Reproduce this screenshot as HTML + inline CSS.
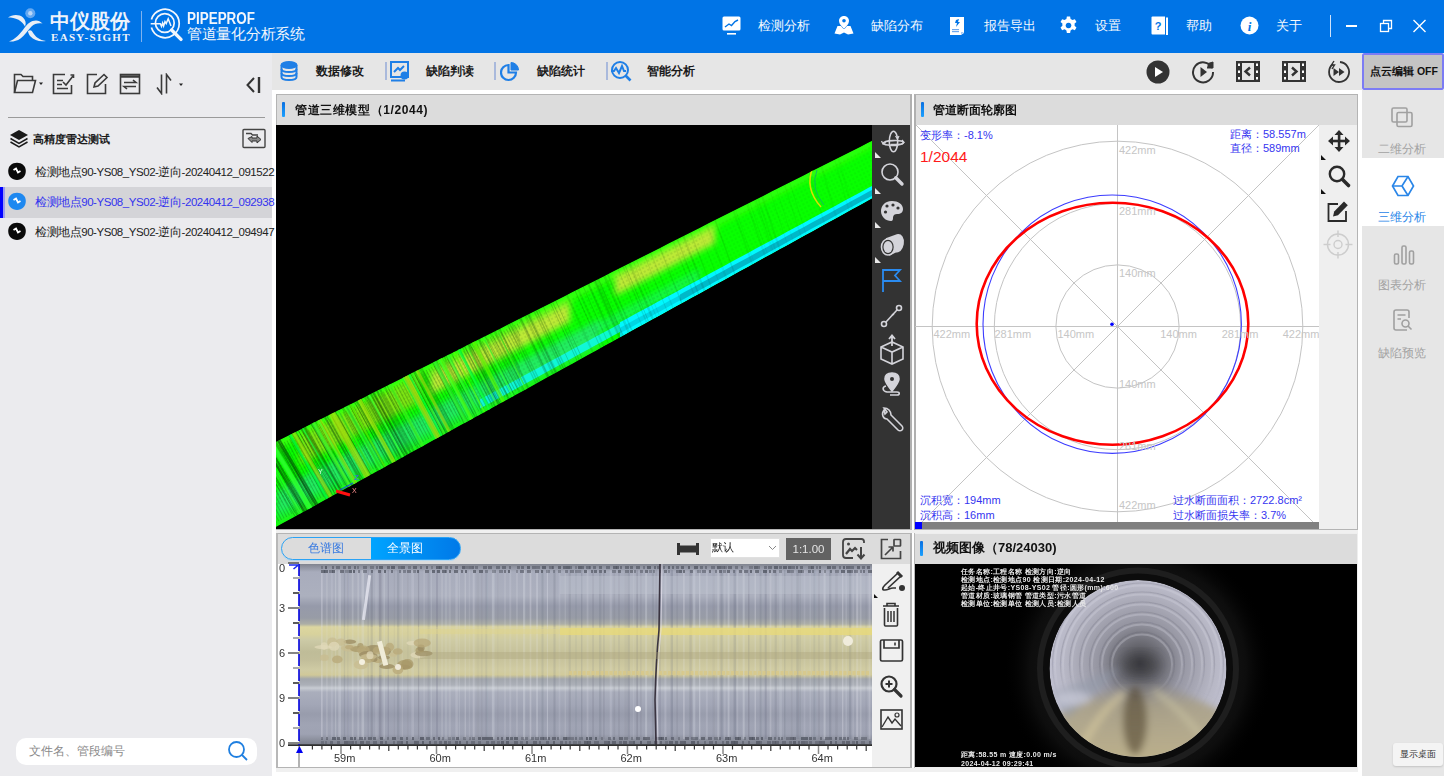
<!DOCTYPE html>
<html><head><meta charset="utf-8">
<style>
*{margin:0;padding:0;box-sizing:border-box}
html,body{width:1444px;height:776px;overflow:hidden;background:#fff;font-family:"Liberation Sans",sans-serif}
.a{position:absolute}
#hdr{left:0;top:0;width:1444px;height:53px;background:#0074E6}
#left{left:0;top:53px;width:272px;height:723px;background:#EBEBEE}
#tb{left:272px;top:53px;width:1090px;height:37px;background:#E6E6E6}
#side{left:1362px;top:90px;width:82px;height:686px;background:#E6E6E6}
.panel{border:1px solid #B4B4B4;background:#fff}
.ph{background:#DCDCDC}
.ttl{font-size:12px;font-weight:bold;color:#111;white-space:nowrap}
.bar{width:3px;height:15px;background:linear-gradient(#0A6FE0,#1AA0FF);border-radius:1px}
.w{color:#fff}
</style></head><body>
<div id="hdr" class="a">
 <svg class="a" style="left:0;top:0" width="52" height="52" viewBox="0 0 52 52">
  <circle cx="30.3" cy="13.2" r="5" fill="#6FAEF2" opacity="0.9"/>
  <circle cx="30.3" cy="13.2" r="2.2" fill="#B8D6F8"/>
  <path d="M8 17.5 C12 14.5 19 14 23 17.5 C25.5 20 26.5 23 25 26.5 C23.5 24 21.5 21.5 18.5 19.8 C15 18 11.5 17.5 8 17.5 Z" fill="#E8EEF6"/>
  <path d="M9 41.5 C15 39.5 19.5 34.5 24 28.5 C27.5 23.5 31 20.5 36 20.5 C38.5 20.5 40.5 21.8 42.5 23.5 C38.5 22.8 34.5 23.5 31.5 26.5 C27.5 30.5 24.5 35.5 20.5 38.5 C17 41 13 41.8 9 41.5 Z" fill="#E8EEF6"/>
  <path d="M28 31 C30 29.5 31.5 30 32.8 32.5 C35.5 37 39.5 40 46 41 C40 42 34 40.5 30.5 36.5 C29 34.8 28.2 32.8 28 31 Z" fill="#E8EEF6"/>
 </svg>
 <div class="a w" style="left:50px;top:8px;font-size:20px;line-height:26px;letter-spacing:0px;font-weight:bold;color:#EEF3FA">中仪股份</div>
 <div class="a" style="left:51px;top:31px;font-family:'Liberation Serif',serif;font-size:11px;line-height:12px;font-weight:bold;letter-spacing:1.3px;color:#EEF3FA">EASY-SIGHT</div>
 <div class="a" style="left:141px;top:11px;width:1px;height:31px;background:#7FB2EE"></div>
 <svg class="a" style="left:145px;top:4px" width="44" height="44" viewBox="0 0 44 44" fill="none" stroke="#F2F6FC">
  <path d="M6.4 15.5 A14.2 14.2 0 1 1 6.4 23.5" stroke-width="1.7"/>
  <circle cx="19.8" cy="19" r="9.4" stroke-width="1.7"/>
  <path d="M5.7 19.8 H15.3 L16.5 22.5 L17.6 19 L18.6 22 L20 17.5 L21.2 19.6 L23.2 14.7 L26 22" stroke-width="1.5"/>
  <path d="M26.6 26 L36 35.4" stroke-width="3.4" stroke-linecap="round"/>
 </svg>
 <div class="a" style="left:187px;top:10px;font-size:16px;line-height:18px;font-weight:bold;color:#F2F6FC;transform:scaleX(0.84);transform-origin:0 0">PIPEPROF</div>
 <div class="a" style="left:187px;top:25px;font-size:15px;line-height:17px;color:#F2F6FC;letter-spacing:-0.3px">管道量化分析系统</div>
<div class="a" style="left:758px;top:17px;font-size:13px;line-height:18px;color:#F4F8FD">检测分析</div>
 <div class="a" style="left:871px;top:17px;font-size:13px;line-height:18px;color:#F4F8FD">缺陷分布</div>
 <div class="a" style="left:984px;top:17px;font-size:13px;line-height:18px;color:#F4F8FD">报告导出</div>
 <div class="a" style="left:1095px;top:17px;font-size:13px;line-height:18px;color:#F4F8FD">设置</div>
 <div class="a" style="left:1186px;top:17px;font-size:13px;line-height:18px;color:#F4F8FD">帮助</div>
 <div class="a" style="left:1276px;top:17px;font-size:13px;line-height:18px;color:#F4F8FD">关于</div>
 <svg class="a" style="left:722px;top:16px" width="20" height="20" viewBox="0 0 20 20">
  <rect x="0.5" y="0.5" width="18" height="14" rx="1.5" fill="#fff"/>
  <rect x="5" y="17" width="9" height="1.6" fill="#fff"/>
  <path d="M3 11 L7 8 L9.5 9.5 L13 5.5 L16 4" stroke="#0074E6" stroke-width="1.4" fill="none"/>
 </svg>
 <svg class="a" style="left:834px;top:15px" width="20" height="20" viewBox="0 0 20 20">
  <path d="M0.5 18.5 L3.5 11 L7 11 L9.5 14 L10.5 14 L13 11 L16.5 11 L19.5 18.5 L14 19.5 L10 17.5 L6 19.5 Z" fill="#fff"/>
  <path d="M10 1 C13 1 15 3.2 15 6 C15 9 12 11.5 10 14 C8 11.5 5 9 5 6 C5 3.2 7 1 10 1 Z" fill="#fff"/>
  <circle cx="10" cy="5.8" r="1.8" fill="#0074E6"/>
 </svg>
 <svg class="a" style="left:949px;top:16px" width="18" height="20" viewBox="0 0 18 20">
  <path d="M1 1 H15 V17 L12 19 H1 Z" fill="#fff"/>
  <path d="M12 19 V16 H15" fill="#A9CCF5"/>
  <path d="M7 4 L10 3 L9 6 L11 6 L7 11 L8 7 L6 7 Z" fill="#0074E6"/>
  <rect x="3" y="13" width="7" height="1.2" fill="#6FA8EE"/><rect x="3" y="15" width="7" height="1.2" fill="#6FA8EE"/>
 </svg>
 <svg class="a" style="left:1059px;top:16px" width="19" height="19" viewBox="0 0 20 20">
  <path fill="#fff" fill-rule="evenodd" d="M8.3 0.5h3.4l0.5 2.6a7.5 7.5 0 0 1 2 1.15l2.5-0.9 1.7 2.95-2 1.7a7.5 7.5 0 0 1 0 2.3l2 1.7-1.7 2.95-2.5-0.9a7.5 7.5 0 0 1-2 1.15l-0.5 2.6H8.3l-0.5-2.6a7.5 7.5 0 0 1-2-1.15l-2.5 0.9-1.7-2.95 2-1.7a7.5 7.5 0 0 1 0-2.3l-2-1.7 1.7-2.95 2.5 0.9a7.5 7.5 0 0 1 2-1.15zM10 7a3 3 0 1 0 0.01 0z"/>
 </svg>
 <svg class="a" style="left:1151px;top:16px" width="18" height="20" viewBox="0 0 18 20">
  <path d="M0.5 1.5 Q0.5 0.5 1.5 0.5 H14 V18.5 H1.5 Q0.5 18.5 0.5 17.5 Z" fill="#fff"/>
  <rect x="15" y="1.5" width="2" height="17.5" fill="#fff"/>
  <text x="7" y="14" font-size="11" font-weight="bold" text-anchor="middle" fill="#0074E6" font-family="Liberation Sans">?</text>
 </svg>
 <svg class="a" style="left:1240px;top:16px" width="19" height="19" viewBox="0 0 19 19">
  <circle cx="9.5" cy="9.5" r="9" fill="#fff"/>
  <text x="9.5" y="15" font-size="13" font-weight="bold" font-style="italic" text-anchor="middle" fill="#0074E6" font-family="Liberation Serif">i</text>
 </svg>
 <div class="a" style="left:1330px;top:15px;width:1px;height:22px;background:#CFE2FA"></div>
 <div class="a" style="left:1346px;top:25px;width:11px;height:1.5px;background:#fff"></div>
 <svg class="a" style="left:1379px;top:19px" width="14" height="14" viewBox="0 0 14 14" fill="none" stroke="#fff" stroke-width="1.3">
  <rect x="1.5" y="4.5" width="8" height="8"/>
  <path d="M4.5 4.5 V1.5 H12.5 V9.5 H9.5"/>
 </svg>
 <svg class="a" style="left:1412px;top:19px" width="15" height="15" viewBox="0 0 15 15" stroke="#fff" stroke-width="1.4">
  <path d="M1.5 1 L13.5 13 M13.5 1 L1.5 13"/>
 </svg>
</div>
<div id="left" class="a">
 <svg class="a" style="left:13px;top:19px" width="32" height="24" viewBox="0 0 32 24" fill="none" stroke="#3A3A3A" stroke-width="1.6">
  <path d="M1.5 20.5 V2.5 H8 L10 4.5 H19.5 V8"/>
  <path d="M1.5 20.5 L4.5 8.5 H22.5 L19.5 20.5 Z"/>
  <path d="M26 10.5 H30 L28 13 Z" fill="#222" stroke="none"/>
 </svg>
 <svg class="a" style="left:52px;top:20px" width="24" height="22" viewBox="0 0 24 22" fill="none" stroke="#3A3A3A" stroke-width="1.6">
  <path d="M13 1.5 H1.5 V20.5 H19.5 V12"/>
  <path d="M5 7.5 H11 M5 11.5 H10 M5 15.5 H16"/>
  <path d="M11 9 L14 12 L21 3"/><path d="M18.5 2 H21.5 V5"/>
 </svg>
 <svg class="a" style="left:86px;top:20px" width="24" height="22" viewBox="0 0 24 22" fill="none" stroke="#3A3A3A" stroke-width="1.6">
  <path d="M11 1.5 H1.5 V20.5 H19.5 V11"/>
  <path d="M8 14 L9 10 L18 1.5 L21 4.5 L12 13 Z"/>
 </svg>
 <svg class="a" style="left:119px;top:20px" width="23" height="22" viewBox="0 0 23 22" fill="none" stroke="#3A3A3A" stroke-width="1.6">
  <rect x="1.5" y="1.5" width="19" height="19"/>
  <path d="M1.5 3.5 H20.5" stroke-width="2.5"/>
  <path d="M5 9.5 H17 L14 7 M17 13.5 H5 L8 16"/>
 </svg>
 <svg class="a" style="left:155px;top:20px" width="32" height="22" viewBox="0 0 32 22" fill="none" stroke="#3A3A3A" stroke-width="1.6">
  <path d="M6.5 1.5 V20.5 L2 14.5"/>
  <path d="M11.5 20.5 V1.5 L16 7.5"/>
  <path d="M24 10.5 H28 L26 13 Z" fill="#222" stroke="none"/>
 </svg>
 <svg class="a" style="left:244px;top:22px" width="18" height="20" viewBox="0 0 18 20" fill="none" stroke="#333" stroke-width="2">
  <path d="M10 3 L3.5 10 L10 17"/><path d="M15 2 V18" stroke-width="2.4"/>
 </svg>
 <div class="a" style="left:8px;top:64px;width:257px;height:1px;background:#9A9A9A"></div>
 <svg class="a" style="left:9px;top:76px" width="20" height="20" viewBox="0 0 20 20">
  <path d="M10 1 L19 6 L10 11 L1 6 Z" fill="#1A1A1A"/>
  <path d="M1.5 9.5 L10 14.3 L18.5 9.5" fill="none" stroke="#1A1A1A" stroke-width="1.5"/>
  <path d="M1.5 13 L10 17.8 L18.5 13" fill="none" stroke="#1A1A1A" stroke-width="1.5"/>
 </svg>
 <div class="a" style="left:33px;top:78px;font-size:11px;line-height:16px;font-weight:bold;color:#1A1A1A">高精度雷达测试</div>
 <svg class="a" style="left:242px;top:75px" width="24" height="21" viewBox="0 0 24 21" fill="none" stroke="#444" stroke-width="1.4">
  <rect x="1" y="1.5" width="22" height="18" rx="1"/>
  <path d="M4 5.5 H9 L10.5 7 H16"/><path d="M6 10.5 L10 8.5 L10 10 H15 V8 L19 11.5 L15 15 V13 H10 V14.5 Z" fill="#888" stroke="#333" stroke-width="1"/>
 </svg>
 <div class="a" style="left:0;top:134px;width:272px;height:31px;background:#D4D4D8"></div>
 <div class="a" style="left:0;top:134px;width:3px;height:31px;background:#0000FF"></div>
 <div class="a" style="left:3px;top:134px;width:2px;height:31px;background:#9C9CF0"></div>
 <svg class="a" style="left:7px;top:109px" width="20" height="19" viewBox="0 0 20 19"><path d="M10 0.8 C15 0.8 18.8 4 18.8 9 C18.8 14.5 15 18 10 18 C5 18 1.2 14.5 1.2 9 C1.2 4 5 0.8 10 0.8 Z" fill="#0A0A0A"/><path d="M6.5 8 L9 6.5 L11 10.5 L13.5 9" stroke="#fff" stroke-width="1.8" fill="none"/></svg>
 <div class="a" style="left:35px;top:111px;font-size:11.5px;line-height:16px;letter-spacing:-0.45px;color:#222;white-space:nowrap">检测地点90-YS08_YS02-逆向-20240412_091522</div>
 <svg class="a" style="left:7px;top:139px" width="20" height="19" viewBox="0 0 20 19"><path d="M10 0.8 C15 0.8 18.8 4 18.8 9 C18.8 14.5 15 18 10 18 C5 18 1.2 14.5 1.2 9 C1.2 4 5 0.8 10 0.8 Z" fill="#1E88F0"/><path d="M6.5 8 L9 6.5 L11 10.5 L13.5 9" stroke="#fff" stroke-width="1.8" fill="none"/></svg>
 <div class="a" style="left:35px;top:141px;font-size:11.5px;line-height:16px;letter-spacing:-0.45px;color:#3333EE;white-space:nowrap">检测地点90-YS08_YS02-逆向-20240412_092938</div>
 <svg class="a" style="left:7px;top:169px" width="20" height="19" viewBox="0 0 20 19"><path d="M10 0.8 C15 0.8 18.8 4 18.8 9 C18.8 14.5 15 18 10 18 C5 18 1.2 14.5 1.2 9 C1.2 4 5 0.8 10 0.8 Z" fill="#0A0A0A"/><path d="M6.5 8 L9 6.5 L11 10.5 L13.5 9" stroke="#fff" stroke-width="1.8" fill="none"/></svg>
 <div class="a" style="left:35px;top:171px;font-size:11.5px;line-height:16px;letter-spacing:-0.45px;color:#222;white-space:nowrap">检测地点90-YS08_YS02-逆向-20240412_094947</div>
 
 <div class="a" style="left:16px;top:685px;width:241px;height:27px;border-radius:10px;background:#fff"></div>
 <div class="a" style="left:29px;top:690px;font-size:12px;line-height:17px;color:#8A8A8A">文件名、管段编号</div>
 <svg class="a" style="left:227px;top:687px" width="22" height="22" viewBox="0 0 22 22" fill="none" stroke="#1F7FE0" stroke-width="1.8">
  <circle cx="9.5" cy="9.5" r="7.5"/><path d="M15 15 L20 20"/>
 </svg>
</div>
<div id="tb" class="a">
 <svg class="a" style="left:8px;top:8px" width="18" height="20" viewBox="0 0 18 20" fill="none" stroke="#1F7FE6" stroke-width="2">
  <ellipse cx="9" cy="4" rx="7.5" ry="3" fill="#1F7FE6"/>
  <path d="M1.5 4 V16 C1.5 18 5 19 9 19 C13 19 16.5 18 16.5 16 V4"/>
  <path d="M1.5 8 C1.5 10 5 11 9 11 C13 11 16.5 10 16.5 8" />
  <path d="M1.5 12 C1.5 14 5 15 9 15 C13 15 16.5 14 16.5 12"/>
  <path d="M1.5 5 V15.5 C4 17.5 14 17.5 16.5 15.5 V5" fill="#1F7FE6" stroke="none" opacity="0"/>
 </svg>
 <div class="a ttl" style="left:44px;top:9px;font-size:12px;line-height:18px;color:#1A1A1A">数据修改</div>
 <div class="a" style="left:113px;top:9px;width:1.5px;height:18px;background:#A9B9DC"></div>
 <svg class="a" style="left:118px;top:8px" width="21" height="21" viewBox="0 0 21 21" fill="none" stroke="#1F7FE6" stroke-width="2">
  <rect x="1" y="1" width="17" height="15"/>
  <path d="M4 11 L8 7 L10 9 L14 5"/>
  <circle cx="14.5" cy="14.5" r="3" fill="#1F7FE6"/>
  <path d="M1 19.5 H15"/>
 </svg>
 <div class="a ttl" style="left:154px;top:9px;font-size:12px;line-height:18px;color:#1A1A1A">缺陷判读</div>
 <div class="a" style="left:222px;top:9px;width:1.5px;height:18px;background:#A9B9DC"></div>
 <svg class="a" style="left:228px;top:8px" width="21" height="21" viewBox="0 0 21 21" fill="none" stroke="#1F7FE6" stroke-width="2.2">
  <path d="M8.5 4 A7.5 7.5 0 1 0 16 11.5 H8.5 Z"/>
  <path d="M11 1.5 A7.5 7.5 0 0 1 18.5 9 H11 Z" fill="#1F7FE6" stroke-width="1"/>
 </svg>
 <div class="a ttl" style="left:265px;top:9px;font-size:12px;line-height:18px;color:#1A1A1A">缺陷统计</div>
 <div class="a" style="left:334px;top:9px;width:1.5px;height:18px;background:#A9B9DC"></div>
 <svg class="a" style="left:338px;top:7px" width="22" height="22" viewBox="0 0 22 22" fill="none" stroke="#1F7FE6" stroke-width="2">
  <circle cx="10" cy="10" r="8"/>
  <path d="M1 11 H4 L6 8 L9 13 L12 6 L14 11 H16"/>
  <path d="M15.5 15.5 L20.5 20.5" stroke-width="2.6"/>
 </svg>
 <div class="a ttl" style="left:375px;top:9px;font-size:12px;line-height:18px;color:#1A1A1A">智能分析</div>
 <svg class="a" style="left:874px;top:7px" width="24" height="24" viewBox="0 0 24 24">
  <circle cx="12" cy="12" r="11.5" fill="#333"/><path d="M9 7 L17 12 L9 17 Z" fill="#fff"/>
 </svg>
 <svg class="a" style="left:919px;top:7px" width="25" height="24" viewBox="0 0 25 24" fill="none" stroke="#333" stroke-width="2">
  <path d="M21 8 A10 10 0 1 0 22 12"/><path d="M17 3.5 L22 2 V8 H16" fill="#333" stroke-width="1"/>
  <path d="M9.5 7 L16 12 L9.5 17 Z" fill="#333" stroke="none"/>
 </svg>
 <svg class="a" style="left:964px;top:8px" width="24" height="21" viewBox="0 0 24 21">
  <rect x="0" y="0" width="24" height="21" fill="#333"/>
  <rect x="6" y="2" width="12" height="17" fill="#E6E6E6"/>
  <rect x="2" y="2.5" width="2" height="2.5" fill="#fff"/><rect x="2" y="9.5" width="2" height="2.5" fill="#fff"/><rect x="2" y="16" width="2" height="2.5" fill="#fff"/>
  <rect x="20" y="2.5" width="2" height="2.5" fill="#fff"/><rect x="20" y="9.5" width="2" height="2.5" fill="#fff"/><rect x="20" y="16" width="2" height="2.5" fill="#fff"/>
  <path d="M14 6.5 L9.5 10.5 L14 14.5" fill="none" stroke="#333" stroke-width="2.4"/>
 </svg>
 <svg class="a" style="left:1010px;top:8px" width="24" height="21" viewBox="0 0 24 21">
  <rect x="0" y="0" width="24" height="21" fill="#333"/>
  <rect x="6" y="2" width="12" height="17" fill="#E6E6E6"/>
  <rect x="2" y="2.5" width="2" height="2.5" fill="#fff"/><rect x="2" y="9.5" width="2" height="2.5" fill="#fff"/><rect x="2" y="16" width="2" height="2.5" fill="#fff"/>
  <rect x="20" y="2.5" width="2" height="2.5" fill="#fff"/><rect x="20" y="9.5" width="2" height="2.5" fill="#fff"/><rect x="20" y="16" width="2" height="2.5" fill="#fff"/>
  <path d="M10 6.5 L14.5 10.5 L10 14.5" fill="none" stroke="#333" stroke-width="2.4"/>
 </svg>
 <svg class="a" style="left:1055px;top:7px" width="24" height="24" viewBox="0 0 24 24" fill="none" stroke="#333" stroke-width="1.8">
  <path d="M6 4 A10 10 0 1 0 13 2"/>
  <path d="M7 1 L4.5 5 L7.5 5 L5 9" stroke-width="1.4"/>
  <path d="M6.5 8 L12 12 L6.5 16 Z M12 8 L17.5 12 L12 16 Z" fill="#333" stroke="none"/>
 </svg>
 <div class="a" style="left:1090px;top:0px;width:82px;height:37px;background:#C4C4C4;border:2px solid #7C7CF4;border-radius:2px"></div>
 <div class="a ttl" style="left:1098px;top:11px;font-size:10.5px;line-height:14px;color:#111">点云编辑 OFF</div>
</div>
<div id="side" class="a">
 <svg class="a" style="left:29px;top:17px" width="24" height="21" viewBox="0 0 24 21" fill="none" stroke="#A0A0A0" stroke-width="1.6">
  <rect x="1" y="1" width="15" height="14" rx="1.5"/><rect x="6" y="5.5" width="15" height="14" rx="1.5"/>
 </svg>
 <div class="a" style="left:16px;top:51px;font-size:12px;line-height:16px;color:#A2A2A2">二维分析</div>
 <div class="a" style="left:0;top:68px;width:82px;height:68px;background:#fff"></div>
 <svg class="a" style="left:29px;top:85px" width="24" height="22" viewBox="0 0 24 22" fill="none" stroke="#2A86E8" stroke-width="1.7">
  <path d="M7 1.5 H17 L22.5 11 L17 20.5 H7 L1.5 11 Z"/>
  <path d="M1.5 11 L11 11 L17 1.5 M11 11 L17 20.5"/>
 </svg>
 <div class="a" style="left:16px;top:119px;font-size:12px;line-height:16px;color:#2A86E8">三维分析</div>
 <svg class="a" style="left:31px;top:154px" width="22" height="22" viewBox="0 0 22 22" fill="none" stroke="#A0A0A0" stroke-width="1.6">
  <rect x="1.5" y="10" width="4" height="10" rx="1.5"/><rect x="9" y="2" width="4" height="18" rx="1.5"/><rect x="16.5" y="7" width="4" height="13" rx="1.5"/>
 </svg>
 <div class="a" style="left:16px;top:187px;font-size:12px;line-height:16px;color:#A2A2A2">图表分析</div>
 <svg class="a" style="left:31px;top:219px" width="22" height="23" viewBox="0 0 22 23" fill="none" stroke="#A0A0A0" stroke-width="1.6">
  <path d="M14 21 H3 Q1 21 1 19 V3 Q1 1 3 1 H14 Q16 1 16 3 V9"/>
  <path d="M4.5 6 H12.5 M4.5 10 H8"/>
  <circle cx="12.5" cy="14.5" r="3.5"/><path d="M15 17 L18.5 20.5"/>
 </svg>
 <div class="a" style="left:16px;top:255px;font-size:12px;line-height:16px;color:#A2A2A2">缺陷预览</div>
 <div class="a" style="left:31px;top:653px;width:50px;height:23px;background:#F4F4F4;border-radius:3px;box-shadow:0 1px 2px rgba(0,0,0,0.15)"></div>
 <div class="a" style="left:38px;top:658px;font-size:9px;line-height:13px;color:#333">显示桌面</div>
</div>

<!-- 3D panel -->
<div class="a panel" style="left:276px;top:94px;width:636px;height:436px;border-right:2px solid #B0B0B0"></div>
<div class="a ph" style="left:277px;top:95px;width:633px;height:30px"></div>
<div class="a" style="left:276px;top:125px;width:596px;height:404px;background:#000"></div>
<!--3D--><svg class="a" style="left:276px;top:125px" width="596" height="404" viewBox="0 0 596 404"><defs><clipPath id="bandclip"><polygon points="0.0,316.8 8.0,312.8 16.0,308.7 24.0,304.7 32.0,300.6 40.0,296.6 48.0,292.6 56.0,288.5 64.0,284.5 72.0,280.4 80.0,276.4 88.0,272.4 96.0,268.3 104.0,264.3 112.0,260.2 120.0,256.2 128.0,252.2 136.0,248.1 144.0,244.1 152.0,240.0 160.0,236.0 168.0,232.0 176.0,227.9 184.0,223.9 192.0,219.8 200.0,215.8 208.0,211.8 216.0,207.7 224.0,203.7 232.0,199.6 240.0,195.6 248.0,191.6 256.0,187.5 264.0,183.5 272.0,179.4 280.0,175.4 288.0,171.4 296.0,167.3 304.0,163.3 312.0,159.2 320.0,155.2 328.0,151.2 336.0,147.1 344.0,143.1 352.0,139.0 360.0,135.0 368.0,131.0 376.0,126.9 384.0,122.9 392.0,118.8 400.0,114.8 408.0,110.8 416.0,106.7 424.0,102.7 432.0,98.6 440.0,94.6 448.0,90.6 456.0,86.5 464.0,82.5 472.0,78.4 480.0,74.4 488.0,70.4 496.0,66.3 504.0,62.3 512.0,58.2 520.0,54.2 528.0,50.2 536.0,46.1 544.0,42.1 552.0,38.0 560.0,34.0 568.0,30.0 576.0,25.9 584.0,21.9 592.0,17.8 596.0,15.8 596.0,73.6 592.0,75.8 584.0,80.2 576.0,84.6 568.0,89.0 560.0,93.4 552.0,97.8 544.0,102.3 536.0,106.7 528.0,111.1 520.0,115.5 512.0,119.9 504.0,124.3 496.0,128.7 488.0,133.1 480.0,137.5 472.0,141.9 464.0,146.3 456.0,150.7 448.0,155.2 440.0,159.6 432.0,164.0 424.0,168.4 416.0,172.8 408.0,177.2 400.0,181.6 392.0,186.0 384.0,190.4 376.0,194.8 368.0,199.2 360.0,203.6 352.0,208.0 344.0,212.5 336.0,216.9 328.0,221.3 320.0,225.7 312.0,230.1 304.0,234.5 296.0,238.9 288.0,243.3 280.0,247.7 272.0,252.1 264.0,256.5 256.0,260.9 248.0,265.4 240.0,269.8 232.0,274.2 224.0,278.6 216.0,283.0 208.0,287.4 200.0,291.8 192.0,296.2 184.0,300.6 176.0,305.0 168.0,309.4 160.0,313.8 152.0,318.2 144.0,322.7 136.0,327.1 128.0,331.5 120.0,335.9 112.0,340.3 104.0,344.7 96.0,349.1 88.0,353.5 80.0,357.9 72.0,362.3 64.0,366.7 56.0,371.1 48.0,375.6 40.0,380.0 32.0,384.4 24.0,388.8 16.0,393.2 8.0,397.6 0.0,402.0"/></clipPath><filter id="bl3" x="-10%" y="-10%" width="120%" height="120%"><feGaussianBlur stdDeviation="3"/></filter><filter id="bl1"><feGaussianBlur stdDeviation="0.7"/></filter><pattern id="dots" width="4" height="4" patternUnits="userSpaceOnUse" patternTransform="rotate(-27)"><circle cx="2" cy="2" r="1.1" fill="#0A4A10"/></pattern><pattern id="dots2" width="5" height="3" patternUnits="userSpaceOnUse" patternTransform="rotate(62)"><rect x="0" y="0" width="5" height="1" fill="#064008"/></pattern></defs><g clip-path="url(#bandclip)"><polygon points="0.0,316.8 8.0,312.8 16.0,308.7 24.0,304.7 32.0,300.6 40.0,296.6 48.0,292.6 56.0,288.5 64.0,284.5 72.0,280.4 80.0,276.4 88.0,272.4 96.0,268.3 104.0,264.3 112.0,260.2 120.0,256.2 128.0,252.2 136.0,248.1 144.0,244.1 152.0,240.0 160.0,236.0 168.0,232.0 176.0,227.9 184.0,223.9 192.0,219.8 200.0,215.8 208.0,211.8 216.0,207.7 224.0,203.7 232.0,199.6 240.0,195.6 248.0,191.6 256.0,187.5 264.0,183.5 272.0,179.4 280.0,175.4 288.0,171.4 296.0,167.3 304.0,163.3 312.0,159.2 320.0,155.2 328.0,151.2 336.0,147.1 344.0,143.1 352.0,139.0 360.0,135.0 368.0,131.0 376.0,126.9 384.0,122.9 392.0,118.8 400.0,114.8 408.0,110.8 416.0,106.7 424.0,102.7 432.0,98.6 440.0,94.6 448.0,90.6 456.0,86.5 464.0,82.5 472.0,78.4 480.0,74.4 488.0,70.4 496.0,66.3 504.0,62.3 512.0,58.2 520.0,54.2 528.0,50.2 536.0,46.1 544.0,42.1 552.0,38.0 560.0,34.0 568.0,30.0 576.0,25.9 584.0,21.9 592.0,17.8 596.0,15.8 596.0,73.6 592.0,75.8 584.0,80.2 576.0,84.6 568.0,89.0 560.0,93.4 552.0,97.8 544.0,102.3 536.0,106.7 528.0,111.1 520.0,115.5 512.0,119.9 504.0,124.3 496.0,128.7 488.0,133.1 480.0,137.5 472.0,141.9 464.0,146.3 456.0,150.7 448.0,155.2 440.0,159.6 432.0,164.0 424.0,168.4 416.0,172.8 408.0,177.2 400.0,181.6 392.0,186.0 384.0,190.4 376.0,194.8 368.0,199.2 360.0,203.6 352.0,208.0 344.0,212.5 336.0,216.9 328.0,221.3 320.0,225.7 312.0,230.1 304.0,234.5 296.0,238.9 288.0,243.3 280.0,247.7 272.0,252.1 264.0,256.5 256.0,260.9 248.0,265.4 240.0,269.8 232.0,274.2 224.0,278.6 216.0,283.0 208.0,287.4 200.0,291.8 192.0,296.2 184.0,300.6 176.0,305.0 168.0,309.4 160.0,313.8 152.0,318.2 144.0,322.7 136.0,327.1 128.0,331.5 120.0,335.9 112.0,340.3 104.0,344.7 96.0,349.1 88.0,353.5 80.0,357.9 72.0,362.3 64.0,366.7 56.0,371.1 48.0,375.6 40.0,380.0 32.0,384.4 24.0,388.8 16.0,393.2 8.0,397.6 0.0,402.0" fill="#08FF00"/><g filter="url(#bl3)"><polygon points="0.0,316.8 8.0,312.8 16.0,308.7 24.0,304.7 32.0,300.6 40.0,296.6 48.0,292.6 56.0,288.5 64.0,284.5 72.0,280.4 80.0,276.4 88.0,272.4 96.0,268.3 104.0,264.3 112.0,260.2 120.0,256.2 128.0,252.2 136.0,248.1 144.0,244.1 152.0,240.0 160.0,236.0 168.0,232.0 176.0,227.9 184.0,223.9 192.0,219.8 200.0,215.8 208.0,211.8 216.0,207.7 224.0,203.7 232.0,199.6 240.0,195.6 248.0,191.6 256.0,187.5 264.0,183.5 272.0,179.4 280.0,175.4 288.0,171.4 296.0,167.3 304.0,163.3 312.0,159.2 320.0,155.2 328.0,151.2 336.0,147.1 344.0,143.1 352.0,139.0 360.0,135.0 368.0,131.0 376.0,126.9 384.0,122.9 392.0,118.8 400.0,114.8 408.0,110.8 416.0,106.7 424.0,102.7 432.0,98.6 440.0,94.6 448.0,90.6 456.0,86.5 464.0,82.5 472.0,78.4 480.0,74.4 488.0,70.4 496.0,66.3 504.0,62.3 512.0,58.2 520.0,54.2 528.0,50.2 536.0,46.1 544.0,42.1 552.0,38.0 560.0,34.0 568.0,30.0 576.0,25.9 584.0,21.9 592.0,17.8 596.0,15.8 596.0,21.6 592.0,23.6 584.0,27.7 576.0,31.8 568.0,35.9 560.0,39.9 552.0,44.0 544.0,48.1 536.0,52.2 528.0,56.3 520.0,60.3 512.0,64.4 504.0,68.5 496.0,72.6 488.0,76.6 480.0,80.7 472.0,84.8 464.0,88.9 456.0,92.9 448.0,97.0 440.0,101.1 432.0,105.2 424.0,109.2 416.0,113.3 408.0,117.4 400.0,121.5 392.0,125.6 384.0,129.6 376.0,133.7 368.0,137.8 360.0,141.9 352.0,145.9 344.0,150.0 336.0,154.1 328.0,158.2 320.0,162.2 312.0,166.3 304.0,170.4 296.0,174.5 288.0,178.6 280.0,182.6 272.0,186.7 264.0,190.8 256.0,194.9 248.0,198.9 240.0,203.0 232.0,207.1 224.0,211.2 216.0,215.2 208.0,219.3 200.0,223.4 192.0,227.5 184.0,231.6 176.0,235.6 168.0,239.7 160.0,243.8 152.0,247.9 144.0,251.9 136.0,256.0 128.0,260.1 120.0,264.2 112.0,268.2 104.0,272.3 96.0,276.4 88.0,280.5 80.0,284.6 72.0,288.6 64.0,292.7 56.0,296.8 48.0,300.9 40.0,304.9 32.0,309.0 24.0,313.1 16.0,317.2 8.0,321.2 0.0,325.3" fill="#40FF10"/><polygon points="24.0,313.1 32.0,309.0 40.0,304.9 48.0,300.9 56.0,296.8 64.0,292.7 72.0,288.6 80.0,284.6 88.0,280.5 96.0,276.4 104.0,272.3 112.0,268.2 120.0,264.2 128.0,260.1 136.0,256.0 144.0,251.9 144.0,277.1 136.0,281.3 128.0,285.5 120.0,289.7 112.0,293.9 104.0,298.1 96.0,302.2 88.0,306.4 80.0,310.6 72.0,314.8 64.0,319.0 56.0,323.2 48.0,327.4 40.0,331.6 32.0,335.8 24.0,340.0" fill="#B0D818" opacity="0.7"/><polygon points="154.0,248.4 160.0,245.3 168.0,241.3 176.0,237.2 184.0,233.1 192.0,229.0 200.0,224.9 208.0,220.8 216.0,216.8 224.0,212.7 232.0,208.6 240.0,204.5 248.0,200.4 256.0,196.3 264.0,192.2 272.0,188.2 280.0,184.1 288.0,180.0 294.0,176.9 294.0,197.0 288.0,200.1 280.0,204.3 272.0,208.5 264.0,212.7 256.0,216.9 248.0,221.1 240.0,225.3 232.0,229.5 224.0,233.6 216.0,237.8 208.0,242.0 200.0,246.2 192.0,250.4 184.0,254.6 176.0,258.8 168.0,262.9 160.0,267.1 154.0,270.3" fill="#C8E838" opacity="0.95"/><polygon points="339.0,152.6 344.0,150.0 352.0,145.9 360.0,141.9 368.0,137.8 376.0,133.7 384.0,129.6 392.0,125.6 400.0,121.5 408.0,117.4 416.0,113.3 424.0,109.2 432.0,105.2 439.0,101.6 439.0,118.5 432.0,122.2 424.0,126.3 416.0,130.5 408.0,134.7 400.0,138.8 392.0,143.0 384.0,147.2 376.0,151.4 368.0,155.5 360.0,159.7 352.0,163.9 344.0,168.1 339.0,170.7" fill="#C8E838" opacity="0.95"/><polygon points="0.0,366.2 8.0,362.0 16.0,357.7 24.0,353.5 32.0,349.2 40.0,344.9 48.0,340.7 56.0,336.4 64.0,332.2 72.0,327.9 80.0,323.7 88.0,319.4 96.0,315.2 104.0,310.9 112.0,306.7 120.0,302.4 128.0,298.2 136.0,293.9 144.0,289.7 152.0,285.4 160.0,281.1 168.0,276.9 176.0,272.6 184.0,268.4 192.0,264.1 200.0,259.9 208.0,255.6 216.0,251.4 224.0,247.1 232.0,242.9 240.0,238.6 248.0,234.4 256.0,230.1 264.0,225.9 272.0,221.6 280.0,217.3 288.0,213.1 296.0,208.8 304.0,204.6 312.0,200.3 320.0,196.1 324.0,194.0 324.0,215.0 320.0,217.2 312.0,221.6 304.0,226.0 296.0,230.3 288.0,234.7 280.0,239.0 272.0,243.4 264.0,247.8 256.0,252.1 248.0,256.5 240.0,260.9 232.0,265.2 224.0,269.6 216.0,274.0 208.0,278.3 200.0,282.7 192.0,287.0 184.0,291.4 176.0,295.8 168.0,300.1 160.0,304.5 152.0,308.9 144.0,313.2 136.0,317.6 128.0,322.0 120.0,326.3 112.0,330.7 104.0,335.0 96.0,339.4 88.0,343.8 80.0,348.1 72.0,352.5 64.0,356.9 56.0,361.2 48.0,365.6 40.0,370.0 32.0,374.3 24.0,378.7 16.0,383.0 8.0,387.4 0.0,391.8" fill="#30E0A0" opacity="0.6"/><polygon points="324.0,196.8 328.0,194.6 336.0,190.4 344.0,186.1 352.0,181.8 360.0,177.6 368.0,173.3 376.0,169.0 384.0,164.8 392.0,160.5 400.0,156.2 408.0,151.9 416.0,147.7 424.0,143.4 424.0,155.2 416.0,159.6 408.0,163.9 400.0,168.2 392.0,172.6 384.0,176.9 376.0,181.2 368.0,185.6 360.0,189.9 352.0,194.2 344.0,198.6 336.0,202.9 328.0,207.2 324.0,209.4" fill="#28E8C0" opacity="0.35"/><polygon points="0.0,395.2 8.0,390.8 16.0,386.4 24.0,382.0 32.0,377.7 40.0,373.3 48.0,368.9 56.0,364.5 64.0,360.2 72.0,355.8 80.0,351.4 88.0,347.0 96.0,342.6 104.0,338.3 112.0,333.9 120.0,329.5 128.0,325.1 136.0,320.7 144.0,316.4 152.0,312.0 160.0,307.6 168.0,303.2 176.0,298.9 184.0,294.5 192.0,290.1 200.0,285.7 208.0,281.3 216.0,277.0 224.0,272.6 232.0,268.2 240.0,263.8 248.0,259.4 256.0,255.1 264.0,250.7 272.0,246.3 280.0,241.9 288.0,237.6 296.0,233.2 304.0,228.8 312.0,224.4 320.0,220.0 324.0,217.9 324.0,223.5 320.0,225.7 312.0,230.1 304.0,234.5 296.0,238.9 288.0,243.3 280.0,247.7 272.0,252.1 264.0,256.5 256.0,260.9 248.0,265.4 240.0,269.8 232.0,274.2 224.0,278.6 216.0,283.0 208.0,287.4 200.0,291.8 192.0,296.2 184.0,300.6 176.0,305.0 168.0,309.4 160.0,313.8 152.0,318.2 144.0,322.7 136.0,327.1 128.0,331.5 120.0,335.9 112.0,340.3 104.0,344.7 96.0,349.1 88.0,353.5 80.0,357.9 72.0,362.3 64.0,366.7 56.0,371.1 48.0,375.6 40.0,380.0 32.0,384.4 24.0,388.8 16.0,393.2 8.0,397.6 0.0,402.0" fill="#22EE22"/></g><g filter="url(#bl1)"><polygon points="204.0,274.4 208.0,272.3 216.0,267.9 224.0,263.6 232.0,259.3 240.0,254.9 248.0,250.6 256.0,246.3 264.0,241.9 272.0,237.6 280.0,233.3 288.0,228.9 296.0,224.6 304.0,220.3 312.0,215.9 320.0,211.6 328.0,207.2 336.0,202.9 344.0,198.6 344.0,206.9 336.0,211.3 328.0,215.7 320.0,220.0 312.0,224.4 304.0,228.8 296.0,233.2 288.0,237.6 280.0,241.9 272.0,246.3 264.0,250.7 256.0,255.1 248.0,259.4 240.0,263.8 232.0,268.2 224.0,272.6 216.0,277.0 208.0,281.3 204.0,283.5" fill="#10F8F0" opacity="0.85"/><polygon points="344.0,197.2 352.0,192.9 360.0,188.5 368.0,184.2 376.0,179.9 384.0,175.6 392.0,171.2 400.0,166.9 408.0,162.6 416.0,158.2 424.0,153.9 432.0,149.6 440.0,145.3 448.0,140.9 456.0,136.6 464.0,132.3 472.0,128.0 480.0,123.6 488.0,119.3 496.0,115.0 504.0,110.7 512.0,106.3 520.0,102.0 528.0,97.7 536.0,93.3 544.0,89.0 552.0,84.7 560.0,80.4 568.0,76.0 576.0,71.7 584.0,67.4 592.0,63.1 596.0,60.9 596.0,73.6 592.0,75.8 584.0,80.2 576.0,84.6 568.0,89.0 560.0,93.4 552.0,97.8 544.0,102.3 536.0,106.7 528.0,111.1 520.0,115.5 512.0,119.9 504.0,124.3 496.0,128.7 488.0,133.1 480.0,137.5 472.0,141.9 464.0,146.3 456.0,150.7 448.0,155.2 440.0,159.6 432.0,164.0 424.0,168.4 416.0,172.8 408.0,177.2 400.0,181.6 392.0,186.0 384.0,190.4 376.0,194.8 368.0,199.2 360.0,203.6 352.0,208.0 344.0,212.5" fill="#00F8FF"/><polygon points="404.0,169.4 408.0,167.2 416.0,162.9 424.0,158.5 432.0,154.2 440.0,149.8 448.0,145.5 456.0,141.1 464.0,136.8 472.0,132.4 480.0,128.1 488.0,123.7 496.0,119.3 504.0,115.0 512.0,110.6 520.0,106.3 528.0,101.9 536.0,97.6 544.0,93.2 552.0,88.9 560.0,84.5 568.0,80.2 576.0,75.8 584.0,71.5 592.0,67.1 596.0,64.9 596.0,70.7 592.0,72.9 584.0,77.3 576.0,81.7 568.0,86.1 560.0,90.5 552.0,94.9 544.0,99.2 536.0,103.6 528.0,108.0 520.0,112.4 512.0,116.8 504.0,121.2 496.0,125.6 488.0,130.0 480.0,134.4 472.0,138.8 464.0,143.1 456.0,147.5 448.0,151.9 440.0,156.3 432.0,160.7 424.0,165.1 416.0,169.5 408.0,173.9 404.0,176.1" fill="#00B8C8"/><polygon points="344.0,202.7 352.0,198.4 360.0,194.0 368.0,189.7 376.0,185.3 384.0,181.0 392.0,176.6 400.0,172.2 404.0,170.1 404.0,175.4 400.0,177.6 392.0,182.0 384.0,186.4 376.0,190.7 368.0,195.1 360.0,199.5 352.0,203.9 344.0,208.3" fill="#00C0D0" opacity="0.6"/></g><polygon points="0.0,323.6 8.0,319.5 16.0,315.5 24.0,311.4 32.0,307.3 40.0,303.3 48.0,299.2 56.0,295.1 64.0,291.1 72.0,287.0 80.0,282.9 88.0,278.9 96.0,274.8 104.0,270.7 112.0,266.6 120.0,262.6 128.0,258.5 136.0,254.4 144.0,250.4 152.0,246.3 160.0,242.2 168.0,238.2 176.0,234.1 184.0,230.0 192.0,225.9 200.0,221.9 208.0,217.8 216.0,213.7 224.0,209.7 232.0,205.6 240.0,201.5 248.0,197.5 256.0,193.4 264.0,189.3 272.0,185.3 280.0,181.2 288.0,177.1 296.0,173.0 304.0,169.0 312.0,164.9 320.0,160.8 328.0,156.8 336.0,152.7 344.0,148.6 352.0,144.6 360.0,140.5 368.0,136.4 376.0,132.4 384.0,128.3 392.0,124.2 400.0,120.1 408.0,116.1 416.0,112.0 424.0,107.9 424.0,153.9 416.0,158.2 408.0,162.6 400.0,166.9 392.0,171.2 384.0,175.6 376.0,179.9 368.0,184.2 360.0,188.5 352.0,192.9 344.0,197.2 336.0,201.5 328.0,205.8 320.0,210.2 312.0,214.5 304.0,218.8 296.0,223.2 288.0,227.5 280.0,231.8 272.0,236.1 264.0,240.5 256.0,244.8 248.0,249.1 240.0,253.4 232.0,257.8 224.0,262.1 216.0,266.4 208.0,270.8 200.0,275.1 192.0,279.4 184.0,283.7 176.0,288.1 168.0,292.4 160.0,296.7 152.0,301.0 144.0,305.4 136.0,309.7 128.0,314.0 120.0,318.4 112.0,322.7 104.0,327.0 96.0,331.3 88.0,335.7 80.0,340.0 72.0,344.3 64.0,348.6 56.0,353.0 48.0,357.3 40.0,361.6 32.0,365.9 24.0,370.3 16.0,374.6 8.0,378.9 0.0,383.3" fill="url(#dots)" opacity="0.13"/><polygon points="424.0,107.9 432.0,103.9 440.0,99.8 448.0,95.7 456.0,91.7 464.0,87.6 472.0,83.5 480.0,79.4 488.0,75.4 496.0,71.3 504.0,67.2 512.0,63.2 520.0,59.1 528.0,55.0 536.0,51.0 544.0,46.9 552.0,42.8 560.0,38.8 568.0,34.7 576.0,30.6 584.0,26.5 592.0,22.5 596.0,20.4 596.0,60.9 592.0,63.1 584.0,67.4 576.0,71.7 568.0,76.0 560.0,80.4 552.0,84.7 544.0,89.0 536.0,93.3 528.0,97.7 520.0,102.0 512.0,106.3 504.0,110.7 496.0,115.0 488.0,119.3 480.0,123.6 472.0,128.0 464.0,132.3 456.0,136.6 448.0,140.9 440.0,145.3 432.0,149.6 424.0,153.9" fill="url(#dots)" opacity="0.07"/><polygon points="0.0,321.1 8.0,317.0 16.0,312.9 24.0,308.9 32.0,304.8 40.0,300.8 48.0,296.7 56.0,292.7 64.0,288.6 72.0,284.5 80.0,280.5 88.0,276.4 96.0,272.4 104.0,268.3 112.0,264.2 120.0,260.2 128.0,256.1 136.0,252.1 144.0,248.0 152.0,244.0 160.0,239.9 168.0,235.8 176.0,231.8 184.0,227.7 192.0,223.7 200.0,219.6 208.0,215.5 216.0,211.5 224.0,207.4 232.0,203.4 240.0,199.3 244.0,197.3 244.0,263.9 240.0,266.1 232.0,270.4 224.0,274.8 216.0,279.2 208.0,283.6 200.0,288.0 192.0,292.4 184.0,296.8 176.0,301.2 168.0,305.6 160.0,309.9 152.0,314.3 144.0,318.7 136.0,323.1 128.0,327.5 120.0,331.9 112.0,336.3 104.0,340.7 96.0,345.1 88.0,349.5 80.0,353.8 72.0,358.2 64.0,362.6 56.0,367.0 48.0,371.4 40.0,375.8 32.0,380.2 24.0,384.6 16.0,389.0 8.0,393.4 0.0,397.7" fill="url(#dots2)" opacity="0.25"/><line x1="-29.0" y1="310.8" x2="29.0" y2="408.0" stroke="#003000" stroke-width="0.8" opacity="0.32"/><line x1="-26.9" y1="309.8" x2="30.9" y2="406.9" stroke="#004A00" stroke-width="0.8" opacity="0.43"/><line x1="-25.9" y1="309.3" x2="31.9" y2="406.3" stroke="#004A00" stroke-width="0.8" opacity="0.39"/><line x1="-23.8" y1="308.3" x2="33.8" y2="405.2" stroke="#004A00" stroke-width="0.8" opacity="0.43"/><line x1="-19.7" y1="306.3" x2="37.7" y2="403.0" stroke="#002400" stroke-width="2.0" opacity="0.50"/><line x1="-18.7" y1="305.8" x2="38.7" y2="402.5" stroke="#002400" stroke-width="1.0" opacity="0.30"/><line x1="-17.6" y1="305.2" x2="39.6" y2="401.9" stroke="#004A00" stroke-width="1.4" opacity="0.42"/><line x1="-16.6" y1="304.7" x2="40.6" y2="401.4" stroke="#003000" stroke-width="1.0" opacity="0.46"/><line x1="-10.4" y1="301.7" x2="46.4" y2="398.1" stroke="#004A00" stroke-width="1.0" opacity="0.33"/><line x1="-9.4" y1="301.2" x2="47.4" y2="397.5" stroke="#003A10" stroke-width="1.4" opacity="0.34"/><line x1="-7.3" y1="300.2" x2="49.3" y2="396.4" stroke="#003000" stroke-width="2.0" opacity="0.52"/><line x1="-6.3" y1="299.7" x2="50.3" y2="395.9" stroke="#003A10" stroke-width="2.0" opacity="0.35"/><line x1="-5.2" y1="299.2" x2="51.2" y2="395.3" stroke="#002400" stroke-width="1.4" opacity="0.43"/><line x1="4.1" y1="294.6" x2="59.9" y2="390.4" stroke="#003A10" stroke-width="1.4" opacity="0.43"/><line x1="7.2" y1="293.1" x2="62.8" y2="388.7" stroke="#002400" stroke-width="1.0" opacity="0.49"/><line x1="10.3" y1="291.6" x2="65.7" y2="387.1" stroke="#004A00" stroke-width="2.0" opacity="0.32"/><line x1="13.4" y1="290.1" x2="68.6" y2="385.4" stroke="#002400" stroke-width="1.0" opacity="0.36"/><line x1="16.5" y1="288.6" x2="71.5" y2="383.8" stroke="#002400" stroke-width="2.0" opacity="0.35"/><line x1="18.5" y1="287.6" x2="73.5" y2="382.7" stroke="#004A00" stroke-width="1.0" opacity="0.29"/><line x1="19.6" y1="287.1" x2="74.4" y2="382.1" stroke="#004A00" stroke-width="1.4" opacity="0.45"/><line x1="20.6" y1="286.6" x2="75.4" y2="381.6" stroke="#002400" stroke-width="1.4" opacity="0.28"/><line x1="26.8" y1="283.5" x2="81.2" y2="378.2" stroke="#003A10" stroke-width="2.0" opacity="0.46"/><line x1="28.9" y1="282.5" x2="83.1" y2="377.1" stroke="#003000" stroke-width="1.0" opacity="0.39"/><line x1="29.9" y1="282.0" x2="84.1" y2="376.6" stroke="#004A00" stroke-width="0.8" opacity="0.29"/><line x1="30.9" y1="281.5" x2="85.1" y2="376.0" stroke="#003000" stroke-width="1.0" opacity="0.25"/><line x1="35.1" y1="279.5" x2="88.9" y2="373.8" stroke="#003A10" stroke-width="1.0" opacity="0.28"/><line x1="40.2" y1="277.0" x2="93.8" y2="371.1" stroke="#003A10" stroke-width="2.0" opacity="0.34"/><line x1="42.3" y1="276.0" x2="95.7" y2="370.0" stroke="#002400" stroke-width="1.4" opacity="0.25"/><line x1="46.4" y1="273.9" x2="99.6" y2="367.8" stroke="#002400" stroke-width="1.0" opacity="0.44"/><line x1="50.6" y1="271.9" x2="103.4" y2="365.6" stroke="#003000" stroke-width="1.4" opacity="0.37"/><line x1="53.7" y1="270.4" x2="106.3" y2="363.9" stroke="#002400" stroke-width="1.0" opacity="0.27"/><line x1="57.8" y1="268.4" x2="110.2" y2="361.7" stroke="#003A10" stroke-width="1.0" opacity="0.27"/><line x1="58.9" y1="267.9" x2="111.1" y2="361.2" stroke="#003000" stroke-width="0.8" opacity="0.33"/><line x1="62.0" y1="266.4" x2="114.0" y2="359.5" stroke="#002400" stroke-width="2.0" opacity="0.35"/><line x1="65.1" y1="264.8" x2="116.9" y2="357.9" stroke="#003000" stroke-width="1.0" opacity="0.43"/><line x1="66.1" y1="264.3" x2="117.9" y2="357.3" stroke="#002400" stroke-width="1.0" opacity="0.32"/><line x1="70.2" y1="262.3" x2="121.8" y2="355.1" stroke="#002400" stroke-width="0.8" opacity="0.41"/><line x1="72.3" y1="261.3" x2="123.7" y2="354.0" stroke="#004A00" stroke-width="2.0" opacity="0.30"/><line x1="76.4" y1="259.3" x2="127.6" y2="351.8" stroke="#003A10" stroke-width="2.0" opacity="0.41"/><line x1="80.6" y1="257.3" x2="131.4" y2="349.6" stroke="#004A00" stroke-width="2.0" opacity="0.23"/><line x1="82.6" y1="256.3" x2="133.4" y2="348.5" stroke="#003A10" stroke-width="1.4" opacity="0.38"/><line x1="83.7" y1="255.8" x2="134.3" y2="347.9" stroke="#003000" stroke-width="0.8" opacity="0.32"/><line x1="86.8" y1="254.2" x2="137.2" y2="346.3" stroke="#004A00" stroke-width="2.0" opacity="0.36"/><line x1="88.8" y1="253.2" x2="139.2" y2="345.2" stroke="#003000" stroke-width="1.4" opacity="0.38"/><line x1="89.9" y1="252.7" x2="140.1" y2="344.6" stroke="#002400" stroke-width="1.4" opacity="0.30"/><line x1="93.0" y1="251.2" x2="143.0" y2="343.0" stroke="#003A10" stroke-width="2.0" opacity="0.35"/><line x1="96.1" y1="249.7" x2="145.9" y2="341.3" stroke="#003000" stroke-width="2.0" opacity="0.23"/><line x1="100.2" y1="247.7" x2="149.8" y2="339.1" stroke="#003000" stroke-width="0.8" opacity="0.22"/><line x1="101.2" y1="247.2" x2="150.8" y2="338.6" stroke="#003A10" stroke-width="0.8" opacity="0.30"/><line x1="103.3" y1="246.2" x2="152.7" y2="337.5" stroke="#003000" stroke-width="0.8" opacity="0.23"/><line x1="120.9" y1="237.6" x2="169.1" y2="328.1" stroke="#004A00" stroke-width="2.0" opacity="0.29"/><line x1="121.9" y1="237.1" x2="170.1" y2="327.6" stroke="#003A10" stroke-width="1.4" opacity="0.21"/><line x1="122.9" y1="236.6" x2="171.1" y2="327.0" stroke="#003000" stroke-width="1.0" opacity="0.23"/><line x1="127.1" y1="234.5" x2="174.9" y2="324.8" stroke="#002400" stroke-width="1.0" opacity="0.31"/><line x1="128.1" y1="234.0" x2="175.9" y2="324.2" stroke="#003A10" stroke-width="1.0" opacity="0.21"/><line x1="130.2" y1="233.0" x2="177.8" y2="323.1" stroke="#004A00" stroke-width="1.0" opacity="0.34"/><line x1="131.2" y1="232.5" x2="178.8" y2="322.6" stroke="#003A10" stroke-width="1.4" opacity="0.26"/><line x1="134.3" y1="231.0" x2="181.7" y2="320.9" stroke="#002400" stroke-width="2.0" opacity="0.24"/><line x1="136.4" y1="230.0" x2="183.6" y2="319.8" stroke="#002400" stroke-width="0.8" opacity="0.24"/><line x1="137.4" y1="229.5" x2="184.6" y2="319.3" stroke="#004A00" stroke-width="0.8" opacity="0.34"/><line x1="138.4" y1="229.0" x2="185.6" y2="318.7" stroke="#004A00" stroke-width="1.4" opacity="0.22"/><line x1="149.8" y1="223.4" x2="196.2" y2="312.7" stroke="#004A00" stroke-width="2.0" opacity="0.30"/><line x1="151.9" y1="222.4" x2="198.1" y2="311.6" stroke="#003000" stroke-width="1.4" opacity="0.17"/><line x1="152.9" y1="221.9" x2="199.1" y2="311.0" stroke="#003000" stroke-width="1.4" opacity="0.31"/><line x1="159.1" y1="218.9" x2="204.9" y2="307.7" stroke="#004A00" stroke-width="0.8" opacity="0.19"/><line x1="161.2" y1="217.9" x2="206.8" y2="306.6" stroke="#002400" stroke-width="1.4" opacity="0.19"/><line x1="163.2" y1="216.9" x2="208.8" y2="305.5" stroke="#004A00" stroke-width="1.4" opacity="0.23"/><line x1="165.3" y1="215.9" x2="210.7" y2="304.4" stroke="#003000" stroke-width="0.8" opacity="0.20"/><line x1="168.4" y1="214.3" x2="213.6" y2="302.8" stroke="#003A10" stroke-width="0.8" opacity="0.24"/><line x1="176.7" y1="210.3" x2="221.3" y2="298.4" stroke="#004A00" stroke-width="1.0" opacity="0.19"/><line x1="179.8" y1="208.8" x2="224.2" y2="296.7" stroke="#003000" stroke-width="1.4" opacity="0.17"/><line x1="181.8" y1="207.8" x2="226.2" y2="295.6" stroke="#003A10" stroke-width="1.4" opacity="0.25"/><line x1="184.9" y1="206.3" x2="229.1" y2="293.9" stroke="#002400" stroke-width="2.0" opacity="0.18"/><line x1="186.0" y1="205.8" x2="230.0" y2="293.4" stroke="#002400" stroke-width="1.4" opacity="0.21"/><line x1="187.0" y1="205.3" x2="231.0" y2="292.8" stroke="#002400" stroke-width="1.0" opacity="0.30"/><line x1="189.1" y1="204.2" x2="232.9" y2="291.7" stroke="#003A10" stroke-width="1.4" opacity="0.21"/><line x1="191.1" y1="203.2" x2="234.9" y2="290.6" stroke="#003000" stroke-width="0.8" opacity="0.22"/><line x1="192.2" y1="202.7" x2="235.8" y2="290.1" stroke="#003A10" stroke-width="0.8" opacity="0.16"/><line x1="196.3" y1="200.7" x2="239.7" y2="287.9" stroke="#004A00" stroke-width="2.0" opacity="0.29"/><line x1="202.5" y1="197.7" x2="245.5" y2="284.6" stroke="#003A10" stroke-width="1.0" opacity="0.26"/><line x1="207.7" y1="195.2" x2="250.3" y2="281.8" stroke="#004A00" stroke-width="0.8" opacity="0.24"/><line x1="208.7" y1="194.6" x2="251.3" y2="281.3" stroke="#002400" stroke-width="0.8" opacity="0.16"/><line x1="211.8" y1="193.1" x2="254.2" y2="279.6" stroke="#004A00" stroke-width="2.0" opacity="0.14"/><line x1="212.9" y1="192.6" x2="255.1" y2="279.1" stroke="#003000" stroke-width="0.8" opacity="0.20"/><line x1="214.9" y1="191.6" x2="257.1" y2="278.0" stroke="#002400" stroke-width="0.8" opacity="0.24"/><line x1="217.0" y1="190.6" x2="259.0" y2="276.9" stroke="#004A00" stroke-width="2.0" opacity="0.24"/><line x1="225.3" y1="186.6" x2="266.7" y2="272.5" stroke="#002400" stroke-width="1.4" opacity="0.15"/><line x1="227.3" y1="185.6" x2="268.7" y2="271.4" stroke="#003A10" stroke-width="1.4" opacity="0.19"/><line x1="229.4" y1="184.6" x2="270.6" y2="270.2" stroke="#003A10" stroke-width="1.4" opacity="0.16"/><line x1="237.7" y1="180.5" x2="278.3" y2="265.8" stroke="#002400" stroke-width="2.0" opacity="0.19"/><line x1="238.7" y1="180.0" x2="279.3" y2="265.3" stroke="#003A10" stroke-width="1.4" opacity="0.19"/><line x1="242.8" y1="178.0" x2="283.2" y2="263.1" stroke="#002400" stroke-width="1.4" opacity="0.13"/><line x1="243.9" y1="177.5" x2="284.1" y2="262.5" stroke="#002400" stroke-width="0.8" opacity="0.22"/><line x1="245.9" y1="176.5" x2="286.1" y2="261.4" stroke="#003A10" stroke-width="2.0" opacity="0.23"/><line x1="247.0" y1="176.0" x2="287.0" y2="260.9" stroke="#003A10" stroke-width="2.0" opacity="0.12"/><line x1="252.1" y1="173.4" x2="291.9" y2="258.1" stroke="#002400" stroke-width="1.4" opacity="0.16"/><line x1="254.2" y1="172.4" x2="293.8" y2="257.0" stroke="#003000" stroke-width="1.4" opacity="0.23"/><line x1="256.3" y1="171.4" x2="295.7" y2="255.9" stroke="#003000" stroke-width="1.4" opacity="0.16"/><line x1="261.4" y1="168.9" x2="300.6" y2="253.2" stroke="#004A00" stroke-width="1.0" opacity="0.19"/><line x1="268.7" y1="165.4" x2="307.3" y2="249.3" stroke="#003A10" stroke-width="1.0" opacity="0.20"/><line x1="270.7" y1="164.4" x2="309.3" y2="248.2" stroke="#003A10" stroke-width="1.0" opacity="0.19"/><line x1="273.8" y1="162.8" x2="312.2" y2="246.6" stroke="#004A00" stroke-width="1.0" opacity="0.21"/><line x1="285.2" y1="157.3" x2="322.8" y2="240.5" stroke="#004A00" stroke-width="2.0" opacity="0.12"/><line x1="293.5" y1="153.2" x2="330.5" y2="236.1" stroke="#002400" stroke-width="1.0" opacity="0.16"/><line x1="296.6" y1="151.7" x2="333.4" y2="234.4" stroke="#003A10" stroke-width="2.0" opacity="0.10"/><line x1="301.7" y1="149.2" x2="338.3" y2="231.7" stroke="#002400" stroke-width="1.0" opacity="0.13"/><line x1="306.9" y1="146.7" x2="343.1" y2="228.9" stroke="#003A10" stroke-width="2.0" opacity="0.18"/><line x1="313.1" y1="143.6" x2="348.9" y2="225.6" stroke="#003A10" stroke-width="2.0" opacity="0.13"/><line x1="314.1" y1="143.1" x2="349.9" y2="225.1" stroke="#003A10" stroke-width="2.0" opacity="0.13"/><line x1="316.2" y1="142.1" x2="351.8" y2="224.0" stroke="#003000" stroke-width="2.0" opacity="0.11"/><line x1="317.2" y1="141.6" x2="352.8" y2="223.4" stroke="#003000" stroke-width="1.0" opacity="0.16"/><line x1="322.4" y1="139.1" x2="357.6" y2="220.7" stroke="#003A10" stroke-width="0.8" opacity="0.11"/><line x1="323.4" y1="138.6" x2="358.6" y2="220.1" stroke="#004A00" stroke-width="2.0" opacity="0.12"/><line x1="326.5" y1="137.1" x2="361.5" y2="218.5" stroke="#003A10" stroke-width="1.4" opacity="0.14"/><line x1="336.9" y1="132.0" x2="371.1" y2="212.9" stroke="#003A10" stroke-width="0.8" opacity="0.13"/><line x1="342.0" y1="129.5" x2="376.0" y2="210.2" stroke="#003A10" stroke-width="1.4" opacity="0.11"/><line x1="344.1" y1="128.5" x2="377.9" y2="209.1" stroke="#003000" stroke-width="1.0" opacity="0.15"/><line x1="348.2" y1="126.5" x2="381.8" y2="206.9" stroke="#002400" stroke-width="1.4" opacity="0.12"/><line x1="349.3" y1="126.0" x2="382.7" y2="206.3" stroke="#004A00" stroke-width="1.0" opacity="0.13"/><line x1="352.4" y1="124.5" x2="385.6" y2="204.7" stroke="#003A10" stroke-width="0.8" opacity="0.12"/><line x1="355.5" y1="122.9" x2="388.5" y2="203.0" stroke="#003000" stroke-width="1.0" opacity="0.08"/><line x1="363.8" y1="118.9" x2="396.2" y2="198.6" stroke="#003A10" stroke-width="0.8" opacity="0.14"/><line x1="370.0" y1="115.9" x2="402.0" y2="195.3" stroke="#003000" stroke-width="1.4" opacity="0.08"/><line x1="379.3" y1="111.3" x2="410.7" y2="190.4" stroke="#004A00" stroke-width="1.4" opacity="0.12"/><line x1="392.7" y1="104.8" x2="423.3" y2="183.2" stroke="#003000" stroke-width="1.4" opacity="0.08"/><line x1="396.8" y1="102.7" x2="427.2" y2="181.0" stroke="#002400" stroke-width="1.4" opacity="0.11"/><line x1="403.0" y1="99.7" x2="433.0" y2="177.7" stroke="#003000" stroke-width="2.0" opacity="0.11"/><line x1="410.3" y1="96.2" x2="439.7" y2="173.8" stroke="#003000" stroke-width="1.4" opacity="0.09"/><line x1="418.5" y1="92.1" x2="447.5" y2="169.4" stroke="#004A00" stroke-width="1.0" opacity="0.07"/><line x1="425.8" y1="88.6" x2="454.2" y2="165.6" stroke="#003000" stroke-width="1.0" opacity="0.06"/><line x1="426.8" y1="88.1" x2="455.2" y2="165.0" stroke="#003A10" stroke-width="1.0" opacity="0.08"/><line x1="435.1" y1="84.1" x2="462.9" y2="160.6" stroke="#002400" stroke-width="1.4" opacity="0.10"/><line x1="453.7" y1="75.0" x2="480.3" y2="150.7" stroke="#004A00" stroke-width="2.0" opacity="0.07"/><line x1="455.7" y1="74.0" x2="482.3" y2="149.6" stroke="#003000" stroke-width="0.8" opacity="0.06"/><line x1="467.1" y1="68.4" x2="492.9" y2="143.5" stroke="#002400" stroke-width="1.0" opacity="0.07"/><line x1="468.1" y1="67.9" x2="493.9" y2="143.0" stroke="#003000" stroke-width="1.0" opacity="0.06"/><line x1="470.2" y1="66.9" x2="495.8" y2="141.9" stroke="#004A00" stroke-width="0.8" opacity="0.07"/><line x1="475.4" y1="64.4" x2="500.6" y2="139.1" stroke="#003A10" stroke-width="2.0" opacity="0.04"/><line x1="476.4" y1="63.9" x2="501.6" y2="138.6" stroke="#003A10" stroke-width="1.0" opacity="0.05"/><line x1="478.5" y1="62.8" x2="503.5" y2="137.5" stroke="#002400" stroke-width="2.0" opacity="0.05"/><line x1="482.6" y1="60.8" x2="507.4" y2="135.3" stroke="#002400" stroke-width="2.0" opacity="0.07"/><line x1="490.9" y1="56.8" x2="515.1" y2="130.8" stroke="#003A10" stroke-width="0.8" opacity="0.07"/><line x1="497.1" y1="53.8" x2="520.9" y2="127.5" stroke="#003A10" stroke-width="0.8" opacity="0.06"/><line x1="505.3" y1="49.7" x2="528.7" y2="123.1" stroke="#004A00" stroke-width="1.4" opacity="0.05"/><line x1="510.5" y1="47.2" x2="533.5" y2="120.4" stroke="#003A10" stroke-width="0.8" opacity="0.07"/><line x1="530.2" y1="37.6" x2="551.8" y2="109.9" stroke="#003000" stroke-width="1.4" opacity="0.05"/><line x1="542.6" y1="31.5" x2="563.4" y2="103.3" stroke="#003A10" stroke-width="2.0" opacity="0.05"/><line x1="556.0" y1="25.0" x2="576.0" y2="96.1" stroke="#003000" stroke-width="1.4" opacity="0.04"/><line x1="559.1" y1="23.5" x2="578.9" y2="94.5" stroke="#003A10" stroke-width="1.0" opacity="0.04"/><line x1="560.1" y1="22.9" x2="579.9" y2="93.9" stroke="#003000" stroke-width="1.0" opacity="0.03"/><line x1="53.7" y1="270.4" x2="106.3" y2="363.9" stroke="#40F020" stroke-width="2" opacity="0.6"/><line x1="170.8" y1="213.2" x2="215.8" y2="301.5" stroke="#60FF00" stroke-width="1.5" opacity="0.6"/><line x1="164.7" y1="216.1" x2="210.2" y2="304.7" stroke="#30FF30" stroke-width="3" opacity="0.6"/><line x1="214.7" y1="191.8" x2="256.8" y2="278.1" stroke="#40F020" stroke-width="1.5" opacity="0.6"/><line x1="34.6" y1="279.7" x2="88.4" y2="374.1" stroke="#A8E010" stroke-width="4" opacity="0.6"/><line x1="157.1" y1="219.9" x2="203.0" y2="308.8" stroke="#60FF00" stroke-width="3" opacity="0.6"/><line x1="65.8" y1="264.5" x2="117.6" y2="357.5" stroke="#60FF00" stroke-width="2" opacity="0.6"/><line x1="61.9" y1="266.4" x2="114.0" y2="359.6" stroke="#30FF30" stroke-width="4" opacity="0.6"/><line x1="29.0" y1="282.5" x2="83.2" y2="377.1" stroke="#A8E010" stroke-width="1.5" opacity="0.6"/><line x1="45.7" y1="274.3" x2="98.9" y2="368.2" stroke="#A8E010" stroke-width="3" opacity="0.6"/><line x1="49.2" y1="272.6" x2="102.1" y2="366.3" stroke="#A8E010" stroke-width="3" opacity="0.6"/><line x1="155.9" y1="220.5" x2="201.9" y2="309.4" stroke="#30FF30" stroke-width="2" opacity="0.6"/><line x1="8.7" y1="292.4" x2="64.2" y2="387.9" stroke="#A8E010" stroke-width="4" opacity="0.6"/><line x1="76.3" y1="259.3" x2="127.5" y2="351.8" stroke="#60FF00" stroke-width="1.5" opacity="0.6"/><line x1="4.3" y1="294.5" x2="60.1" y2="390.3" stroke="#00FF40" stroke-width="1.5" opacity="0.6"/><line x1="-23.4" y1="308.1" x2="34.3" y2="405.0" stroke="#30FF30" stroke-width="3" opacity="0.6"/><line x1="47.6" y1="273.4" x2="100.6" y2="367.2" stroke="#A8E010" stroke-width="3" opacity="0.6"/><line x1="105.7" y1="245.0" x2="155.0" y2="336.2" stroke="#40F020" stroke-width="3" opacity="0.6"/><line x1="119.6" y1="238.2" x2="167.9" y2="328.8" stroke="#00FF40" stroke-width="3" opacity="0.6"/><line x1="128.3" y1="233.9" x2="176.1" y2="324.1" stroke="#40F020" stroke-width="2" opacity="0.6"/><line x1="5.0" y1="294.2" x2="60.8" y2="389.9" stroke="#00FF40" stroke-width="2" opacity="0.6"/><line x1="84.7" y1="255.2" x2="135.3" y2="347.4" stroke="#30FF30" stroke-width="2" opacity="0.6"/><line x1="190.7" y1="203.4" x2="234.5" y2="290.9" stroke="#60FF00" stroke-width="4" opacity="0.6"/><line x1="175.7" y1="210.8" x2="220.4" y2="298.9" stroke="#30FF30" stroke-width="1.5" opacity="0.6"/><line x1="133.6" y1="231.3" x2="181.1" y2="321.3" stroke="#A8E010" stroke-width="3" opacity="0.6"/><line x1="121.0" y1="237.5" x2="169.2" y2="328.0" stroke="#A8E010" stroke-width="4" opacity="0.6"/><line x1="122.8" y1="236.6" x2="170.9" y2="327.1" stroke="#A8E010" stroke-width="4" opacity="0.6"/><line x1="33.7" y1="280.2" x2="87.6" y2="374.6" stroke="#30FF30" stroke-width="1.5" opacity="0.6"/><line x1="-13.5" y1="303.2" x2="43.5" y2="399.7" stroke="#30FF30" stroke-width="4" opacity="0.6"/><line x1="17.8" y1="287.9" x2="72.8" y2="383.0" stroke="#00FF40" stroke-width="1.5" opacity="0.6"/><line x1="200.9" y1="198.5" x2="244.0" y2="285.4" stroke="#30FF30" stroke-width="1.5" opacity="0.6"/><line x1="125.5" y1="235.3" x2="173.5" y2="325.6" stroke="#00FF40" stroke-width="2" opacity="0.6"/><line x1="75.2" y1="259.9" x2="126.4" y2="352.5" stroke="#A8E010" stroke-width="4" opacity="0.6"/><line x1="176.1" y1="210.6" x2="220.8" y2="298.6" stroke="#00FF40" stroke-width="3" opacity="0.6"/><line x1="-12.9" y1="302.9" x2="44.0" y2="399.4" stroke="#30FF30" stroke-width="4" opacity="0.6"/><line x1="151.4" y1="222.6" x2="197.7" y2="311.8" stroke="#30FF30" stroke-width="4" opacity="0.6"/><line x1="184.0" y1="206.7" x2="228.1" y2="294.5" stroke="#40F020" stroke-width="1.5" opacity="0.6"/><line x1="158.1" y1="219.4" x2="203.9" y2="308.3" stroke="#40F020" stroke-width="2" opacity="0.6"/><line x1="28.0" y1="283.0" x2="82.3" y2="377.6" stroke="#30FF30" stroke-width="3" opacity="0.6"/><line x1="29.6" y1="282.2" x2="83.8" y2="376.8" stroke="#30FF30" stroke-width="1.5" opacity="0.6"/><path d="M537,42 Q528,63 545,82" stroke="#D8E000" stroke-width="1.5" fill="none"/><path d="M541,45 Q534,63 548,80" stroke="#10A080" stroke-width="1" fill="none" opacity="0.7"/></g><line x1="64" y1="365" x2="77" y2="358" stroke="#2030FF" stroke-width="1"/><line x1="60" y1="366" x2="74" y2="370" stroke="#FF1010" stroke-width="3"/><text x="78" y="355" font-size="8" fill="#4050FF" font-family="Liberation Sans">Z</text><text x="76" y="368" font-size="7" fill="#FF9090" font-family="Liberation Sans">X</text><text x="42" y="349" font-size="7" fill="#E0FFE0" font-family="Liberation Sans">Y</text></svg><!--/3D-->
<div class="a" style="left:872px;top:125px;width:38px;height:404px;background:#333">
 <svg class="a" style="left:0;top:0" width="38" height="320" viewBox="0 0 38 320" fill="none" stroke="#D4D4DA" stroke-width="1.6">
  <!-- rotate -->
  <ellipse cx="21.5" cy="16.5" rx="4.2" ry="10.3"/>
  <path d="M11 18.5 C12 15 30 14.5 31.5 17.5 C31 20.5 13 21 11 18.5" stroke-width="1.7"/>
  <path d="M9.5 16 L11 19 L14 17.5 M30 15 L32 17.5 L29.5 19.5" stroke-width="1.3"/>
  <path d="M19 20 L25 20" stroke-width="2.5"/>
  <path d="M23.5 11 L25.5 14 L27 11" stroke-width="1.2"/>
  <!-- magnifier -->
  <circle cx="18" cy="47" r="8"/><path d="M23.8 52.8 L30 59" stroke-width="3.4" stroke-linecap="round"/>
  <!-- palette -->
  <path d="M20 76 C12 76 9 82 9 86 C9 92 14 96 19 96 C21 96 21 94 21 92.5 C21 90 23 89 25 89 C29 89 31 87 31 84 C31 79 26 76 20 76 Z" fill="#D4D4DA" stroke="none"/>
  <circle cx="15" cy="81" r="1.6" fill="#333" stroke="none"/><circle cx="21" cy="80" r="1.6" fill="#333" stroke="none"/><circle cx="26" cy="83" r="1.6" fill="#333" stroke="none"/><circle cx="13.5" cy="87" r="1.6" fill="#333" stroke="none"/>
  <!-- pipe --><g transform="translate(0,3)">
  <path d="M14 111 L25 107 C29 106 32 110 31 116 C30 121 27 124 23 124 L17 127" fill="#D4D4DA"/>
  <ellipse cx="16" cy="119" rx="6.5" ry="8" fill="#333"/><ellipse cx="16" cy="119" rx="4.5" ry="6" fill="#D4D4DA" stroke="none"/>
  </g><!-- flag -->
  <path d="M11 167 V145 H28 L23 150.5 L28 156 H11" stroke="#2A8BF0" stroke-width="1.8"/>
  <!-- line -->
  <circle cx="12" cy="199" r="2.5"/><circle cx="27" cy="183" r="2.5"/><path d="M14 197 L25 185"/><path d="M20 190 l2 -1"/>
  <!-- box -->
  <path d="M9 222 L20 217 L31 222 V234 L20 239 L9 234 Z M9 222 L20 227 L31 222 M20 227 V239"/>
  <path d="M20 221 V211 M17 214 L20 210.5 L23 214" stroke-width="1.8"/>
  <!-- location -->
  <path d="M20 266 C16 261 13 257 13 254 C13 250 16 248 20 248 C24 248 27 250 27 254 C27 257 24 261 20 266 Z" fill="#D4D4DA"/>
  <circle cx="20" cy="254" r="2" fill="#333" stroke="none"/>
  <path d="M14 261 C10 262 10 266 15 267 H25 C28 267 28 270 25 270 H18"/>
  <!-- wrench -->
  <path d="M12 285 C9 289 11 294 15 294 L26 305 C27 306 29 306 30 305 C31 304 31 302 30 301 L19 290 C19 286 16 283 12 283 L15 287 L13 289 Z"/>
 </svg>
 <svg class="a" style="left:2px;top:27px" width="8" height="140" viewBox="0 0 8 140" fill="#E8E8E8">
  <path d="M1 0 V6 H7 Z"/><path d="M1 36 V42 H7 Z"/><path d="M1 70 V76 H7 Z"/><path d="M1 105 V111 H7 Z"/>
 </svg>
</div>

<!-- profile panel -->
<div class="a panel" style="left:914px;top:94px;width:444px;height:436px;border-left:2px solid #B0B0B0"></div>
<div class="a ph" style="left:916px;top:95px;width:441px;height:30px"></div>
<!--PROF--><svg class="a" style="left:915px;top:125px" width="404" height="404" viewBox="0 0 404 404"><circle cx="202.5" cy="201.5" r="61.6" fill="none" stroke="#C4C4C4" stroke-width="1"/><circle cx="202.5" cy="201.5" r="123.2" fill="none" stroke="#C4C4C4" stroke-width="1"/><circle cx="202.5" cy="201.5" r="185.3" fill="none" stroke="#C4C4C4" stroke-width="1"/><line x1="0" y1="201.5" x2="404" y2="201.5" stroke="#C4C4C4" stroke-width="1"/><line x1="202.5" y1="0" x2="202.5" y2="404" stroke="#C4C4C4" stroke-width="1"/><line x1="-217.5" y1="-218.5" x2="622.5" y2="621.5" stroke="#C4C4C4" stroke-width="1"/><line x1="-217.5" y1="621.5" x2="622.5" y2="-218.5" stroke="#C4C4C4" stroke-width="1"/><circle cx="197.20000000000005" cy="199.2" r="129.2" fill="none" stroke="#3C3CFF" stroke-width="1.1"/><ellipse cx="197.5" cy="198.8" rx="135.8" ry="121" fill="none" stroke="#FF0000" stroke-width="2.6"/><circle cx="197" cy="199.3" r="1.8" fill="#0000FF"/><text x="18.5" y="213.0" font-size="11" fill="#C6C6C6" text-anchor="start" font-family="Liberation Sans">422mm</text><text x="79.5" y="213.0" font-size="11" fill="#C6C6C6" text-anchor="start" font-family="Liberation Sans">281mm</text><text x="142.5" y="213.0" font-size="11" fill="#C6C6C6" text-anchor="start" font-family="Liberation Sans">140mm</text><text x="263.5" y="213.0" font-size="11" fill="#C6C6C6" text-anchor="middle" font-family="Liberation Sans">140mm</text><text x="325.0" y="213.0" font-size="11" fill="#C6C6C6" text-anchor="middle" font-family="Liberation Sans">281mm</text><text x="386.0" y="213.0" font-size="11" fill="#C6C6C6" text-anchor="middle" font-family="Liberation Sans">422mm</text><text x="204.0" y="28.5" font-size="11" fill="#C6C6C6" text-anchor="start" font-family="Liberation Sans">422mm</text><text x="204.0" y="90.0" font-size="11" fill="#C6C6C6" text-anchor="start" font-family="Liberation Sans">281mm</text><text x="204.0" y="152.0" font-size="11" fill="#C6C6C6" text-anchor="start" font-family="Liberation Sans">140mm</text><text x="204.0" y="263.0" font-size="11" fill="#C6C6C6" text-anchor="start" font-family="Liberation Sans">140mm</text><text x="204.0" y="325.0" font-size="11" fill="#C6C6C6" text-anchor="start" font-family="Liberation Sans">281mm</text><text x="204.0" y="384.0" font-size="11" fill="#C6C6C6" text-anchor="start" font-family="Liberation Sans">422mm</text></svg><!--/PROF-->
<div class="a" style="left:920px;top:128px;font-size:11px;line-height:14px;color:#3535F0;white-space:nowrap">变形率：-8.1%</div>
<div class="a" style="left:920px;top:148px;font-size:15.5px;line-height:18px;color:#FF1A1A">1/2044</div>
<div class="a" style="left:1230px;top:127px;font-size:11px;line-height:14px;color:#3535F0;white-space:nowrap">距离：58.557m<br>直径：589mm</div>
<div class="a" style="left:920px;top:493px;font-size:11px;line-height:15px;color:#3535F0;white-space:nowrap">沉积宽：194mm<br>沉积高：16mm</div>
<div class="a" style="left:1173px;top:493px;font-size:11px;line-height:15px;color:#3535F0;white-space:nowrap">过水断面面积：2722.8cm²<br>过水断面损失率：3.7%</div>
<div class="a" style="left:915px;top:522px;width:404px;height:7px;background:#808080"></div>
<div class="a" style="left:915px;top:522px;width:7px;height:7px;background:#0000FF"></div>
<div class="a" style="left:1319px;top:125px;width:38px;height:404px;background:#EFEFEF">
 <svg class="a" style="left:0;top:0" width="38" height="140" viewBox="0 0 38 140">
  <g fill="#2A2A2A">
   <rect x="18.8" y="8" width="2.6" height="16"/><rect x="12" y="14.7" width="16" height="2.6"/><path d="M20 5 L24.5 10 H15.5 Z M20 27 L24.5 22 H15.5 Z M9 16 L14 11.5 V20.5 Z M31 16 L26 11.5 V20.5 Z"/>
  </g>
  <g fill="none" stroke="#2A2A2A">
   <circle cx="18" cy="49" r="7.2" stroke-width="2.4"/><path d="M23.5 54.5 L29.5 60.5" stroke-width="3.6" stroke-linecap="round"/>
   <path d="M19 79 H9.5 V96 H27 V86" stroke-width="1.8"/>
  </g>
  <path d="M14 91.5 L15.2 86.5 L25 76.5 L28.8 80.3 L19 90.3 Z" fill="#2A2A2A"/>
  <g fill="none" stroke="#CDCDCD" stroke-width="1.4">
   <circle cx="19" cy="119.5" r="10.5"/><circle cx="19" cy="119.5" r="4"/>
   <path d="M19 105.5 V112 M19 127 V133.5 M4.5 119.5 H11.5 M26.5 119.5 H33.5"/>
  </g>
  <path d="M2 30 V35 H7 Z M2 64 V69 H7 Z" fill="#111"/>
 </svg>
</div>

<div class="a" style="left:276px;top:530px;width:1082px;height:3px;background:#F0F0F0"></div>
<div class="a" style="left:276px;top:768px;width:1082px;height:4px;background:#F0F0F0"></div>
<!-- panorama panel -->
<div class="a panel" style="left:276px;top:533px;width:636px;height:235px;border-left:2px solid #B8B8B8;border-right:2px solid #B0B0B0"></div>
<div class="a ph" style="left:278px;top:534px;width:632px;height:30px"></div>
<div class="a" style="left:278px;top:564px;width:21px;height:203px;background:#fff"></div>
<div class="a" style="left:299px;top:745px;width:573px;height:22px;background:#fff"></div>
<!--PANO--><svg class="a" style="left:299px;top:564px" width="573" height="181" viewBox="0 0 573 181"><defs><linearGradient id="pg" x1="0" y1="0" x2="0" y2="1"><stop offset="0.0000" stop-color="#80848F"/><stop offset="0.0442" stop-color="#A8ACBC"/><stop offset="0.1768" stop-color="#ACB0BE"/><stop offset="0.2320" stop-color="#969AAA"/><stop offset="0.2983" stop-color="#989CA6"/><stop offset="0.3315" stop-color="#ACAEA6"/><stop offset="0.3481" stop-color="#DCD6A0"/><stop offset="0.3867" stop-color="#D8D29C"/><stop offset="0.4199" stop-color="#CCCAA6"/><stop offset="0.4862" stop-color="#BFBC98"/><stop offset="0.5304" stop-color="#C2BE9A"/><stop offset="0.5856" stop-color="#CFCBA4"/><stop offset="0.6133" stop-color="#D0C898"/><stop offset="0.6354" stop-color="#A2A6AC"/><stop offset="0.6685" stop-color="#ACB0B8"/><stop offset="0.6851" stop-color="#C8CCD2"/><stop offset="0.7072" stop-color="#AAAEBC"/><stop offset="0.7790" stop-color="#A2A6B6"/><stop offset="0.8287" stop-color="#989CAC"/><stop offset="0.8895" stop-color="#A0A4B4"/><stop offset="0.9392" stop-color="#9EA2B2"/><stop offset="0.9945" stop-color="#7E828E"/></linearGradient><linearGradient id="lg" x1="0" y1="0" x2="1" y2="0"><stop offset="0" stop-color="#fff" stop-opacity="0"/><stop offset="1" stop-color="#fff" stop-opacity="0"/></linearGradient><filter id="pb"><feGaussianBlur stdDeviation="0.6"/></filter></defs><rect x="0" y="0" width="573" height="181" fill="url(#pg)"/><g filter="url(#pb)"><rect x="22.0" y="6" width="1.7" height="169" fill="#E4E6EE" opacity="0.30"/><rect x="26.9" y="6" width="1.8" height="169" fill="#E4E6EE" opacity="0.16"/><rect x="31.9" y="6" width="2.0" height="169" fill="#E4E6EE" opacity="0.14"/><rect x="36.1" y="6" width="1.1" height="169" fill="#E4E6EE" opacity="0.26"/><rect x="39.3" y="6" width="2.6" height="169" fill="#E4E6EE" opacity="0.25"/><rect x="44.8" y="6" width="1.3" height="169" fill="#606476" opacity="0.18"/><rect x="48.0" y="6" width="1.3" height="169" fill="#606476" opacity="0.09"/><rect x="52.8" y="6" width="1.7" height="169" fill="#E4E6EE" opacity="0.22"/><rect x="58.4" y="6" width="1.8" height="169" fill="#E4E6EE" opacity="0.21"/><rect x="62.5" y="6" width="2.6" height="169" fill="#E4E6EE" opacity="0.29"/><rect x="68.4" y="6" width="1.5" height="169" fill="#606476" opacity="0.13"/><rect x="71.6" y="6" width="2.2" height="169" fill="#606476" opacity="0.23"/><rect x="76.2" y="6" width="2.5" height="169" fill="#E4E6EE" opacity="0.12"/><rect x="80.0" y="6" width="2.5" height="169" fill="#606476" opacity="0.26"/><rect x="84.6" y="6" width="1.1" height="169" fill="#E4E6EE" opacity="0.28"/><rect x="88.7" y="6" width="1.1" height="169" fill="#606476" opacity="0.25"/><rect x="94.7" y="6" width="1.2" height="169" fill="#606476" opacity="0.10"/><rect x="98.0" y="6" width="2.3" height="169" fill="#606476" opacity="0.18"/><rect x="102.7" y="6" width="1.3" height="169" fill="#E4E6EE" opacity="0.15"/><rect x="108.3" y="6" width="1.2" height="169" fill="#606476" opacity="0.12"/><rect x="112.4" y="6" width="2.6" height="169" fill="#E4E6EE" opacity="0.18"/><rect x="118.9" y="6" width="1.3" height="169" fill="#606476" opacity="0.23"/><rect x="124.5" y="6" width="1.2" height="169" fill="#E4E6EE" opacity="0.16"/><rect x="128.5" y="6" width="2.2" height="169" fill="#606476" opacity="0.13"/><rect x="131.8" y="6" width="1.1" height="169" fill="#E4E6EE" opacity="0.17"/><rect x="137.2" y="6" width="1.6" height="169" fill="#606476" opacity="0.25"/><rect x="142.2" y="6" width="1.9" height="169" fill="#E4E6EE" opacity="0.16"/><rect x="145.8" y="6" width="2.5" height="169" fill="#E4E6EE" opacity="0.17"/><rect x="149.6" y="6" width="2.2" height="169" fill="#E4E6EE" opacity="0.16"/><rect x="156.4" y="6" width="2.4" height="169" fill="#E4E6EE" opacity="0.20"/><rect x="159.8" y="6" width="1.1" height="169" fill="#E4E6EE" opacity="0.17"/><rect x="165.6" y="6" width="1.4" height="169" fill="#E4E6EE" opacity="0.24"/><rect x="169.8" y="6" width="1.3" height="169" fill="#E4E6EE" opacity="0.13"/><rect x="173.7" y="6" width="1.9" height="169" fill="#E4E6EE" opacity="0.24"/><rect x="177.8" y="6" width="2.5" height="169" fill="#606476" opacity="0.08"/><rect x="181.9" y="6" width="1.7" height="169" fill="#606476" opacity="0.11"/><rect x="186.3" y="6" width="1.9" height="169" fill="#606476" opacity="0.15"/><rect x="192.9" y="6" width="2.6" height="169" fill="#E4E6EE" opacity="0.26"/><rect x="198.2" y="6" width="1.2" height="169" fill="#606476" opacity="0.08"/><rect x="204.9" y="6" width="2.1" height="169" fill="#E4E6EE" opacity="0.12"/><rect x="210.4" y="6" width="1.8" height="169" fill="#E4E6EE" opacity="0.18"/><rect x="217.4" y="6" width="1.1" height="169" fill="#E4E6EE" opacity="0.27"/><rect x="224.0" y="6" width="2.2" height="169" fill="#E4E6EE" opacity="0.28"/><rect x="230.7" y="6" width="1.6" height="169" fill="#E4E6EE" opacity="0.30"/><rect x="237.2" y="6" width="1.7" height="169" fill="#E4E6EE" opacity="0.29"/><rect x="242.5" y="6" width="2.0" height="169" fill="#606476" opacity="0.18"/><rect x="247.9" y="6" width="1.1" height="169" fill="#E4E6EE" opacity="0.32"/><rect x="254.4" y="6" width="2.2" height="169" fill="#606476" opacity="0.21"/><rect x="259.7" y="6" width="1.7" height="169" fill="#E4E6EE" opacity="0.14"/><rect x="265.7" y="6" width="1.0" height="169" fill="#E4E6EE" opacity="0.22"/><rect x="269.7" y="6" width="2.1" height="169" fill="#606476" opacity="0.19"/><rect x="276.3" y="6" width="1.4" height="169" fill="#606476" opacity="0.13"/><rect x="282.1" y="6" width="1.3" height="169" fill="#606476" opacity="0.24"/><rect x="287.7" y="6" width="1.7" height="169" fill="#E4E6EE" opacity="0.19"/><rect x="293.4" y="6" width="1.3" height="169" fill="#606476" opacity="0.23"/><rect x="300.0" y="6" width="2.4" height="169" fill="#606476" opacity="0.18"/><rect x="304.3" y="6" width="1.2" height="169" fill="#606476" opacity="0.23"/><rect x="310.7" y="6" width="2.1" height="169" fill="#E4E6EE" opacity="0.18"/><rect x="314.4" y="6" width="1.7" height="169" fill="#606476" opacity="0.12"/><rect x="319.0" y="6" width="2.0" height="169" fill="#606476" opacity="0.14"/><rect x="325.4" y="6" width="2.6" height="169" fill="#606476" opacity="0.09"/><rect x="328.5" y="6" width="2.4" height="169" fill="#606476" opacity="0.21"/><rect x="333.8" y="6" width="1.5" height="169" fill="#E4E6EE" opacity="0.12"/><rect x="337.3" y="6" width="1.7" height="169" fill="#606476" opacity="0.23"/><rect x="341.3" y="6" width="1.2" height="169" fill="#606476" opacity="0.19"/><rect x="346.1" y="6" width="2.0" height="169" fill="#E4E6EE" opacity="0.28"/><rect x="352.9" y="6" width="2.1" height="169" fill="#606476" opacity="0.17"/><rect x="356.6" y="6" width="1.0" height="169" fill="#606476" opacity="0.21"/><rect x="360.3" y="6" width="1.4" height="169" fill="#606476" opacity="0.21"/><rect x="365.4" y="6" width="2.0" height="169" fill="#E4E6EE" opacity="0.20"/><rect x="371.6" y="6" width="2.4" height="169" fill="#606476" opacity="0.25"/><rect x="377.5" y="6" width="1.2" height="169" fill="#606476" opacity="0.19"/><rect x="384.1" y="6" width="1.6" height="169" fill="#E4E6EE" opacity="0.30"/><rect x="390.3" y="6" width="2.5" height="169" fill="#606476" opacity="0.20"/><rect x="394.1" y="6" width="2.2" height="169" fill="#E4E6EE" opacity="0.25"/><rect x="400.0" y="6" width="1.3" height="169" fill="#E4E6EE" opacity="0.32"/><rect x="406.9" y="6" width="1.9" height="169" fill="#E4E6EE" opacity="0.18"/><rect x="413.5" y="6" width="2.4" height="169" fill="#606476" opacity="0.09"/><rect x="418.3" y="6" width="1.9" height="169" fill="#E4E6EE" opacity="0.22"/><rect x="421.4" y="6" width="2.3" height="169" fill="#606476" opacity="0.22"/><rect x="425.1" y="6" width="1.5" height="169" fill="#E4E6EE" opacity="0.15"/><rect x="428.7" y="6" width="1.8" height="169" fill="#E4E6EE" opacity="0.29"/><rect x="434.5" y="6" width="2.5" height="169" fill="#606476" opacity="0.25"/><rect x="437.8" y="6" width="1.4" height="169" fill="#E4E6EE" opacity="0.18"/><rect x="443.7" y="6" width="2.0" height="169" fill="#E4E6EE" opacity="0.29"/><rect x="449.0" y="6" width="1.5" height="169" fill="#606476" opacity="0.23"/><rect x="455.6" y="6" width="1.3" height="169" fill="#E4E6EE" opacity="0.31"/><rect x="460.6" y="6" width="1.9" height="169" fill="#606476" opacity="0.18"/><rect x="465.7" y="6" width="2.0" height="169" fill="#606476" opacity="0.25"/><rect x="470.7" y="6" width="1.6" height="169" fill="#E4E6EE" opacity="0.23"/><rect x="475.7" y="6" width="2.1" height="169" fill="#606476" opacity="0.18"/><rect x="480.3" y="6" width="2.5" height="169" fill="#E4E6EE" opacity="0.17"/><rect x="485.2" y="6" width="1.2" height="169" fill="#606476" opacity="0.23"/><rect x="491.8" y="6" width="1.8" height="169" fill="#606476" opacity="0.11"/><rect x="497.3" y="6" width="2.5" height="169" fill="#606476" opacity="0.22"/><rect x="500.4" y="6" width="1.3" height="169" fill="#606476" opacity="0.20"/><rect x="504.7" y="6" width="1.6" height="169" fill="#E4E6EE" opacity="0.14"/><rect x="510.6" y="6" width="1.2" height="169" fill="#E4E6EE" opacity="0.17"/><rect x="514.4" y="6" width="1.8" height="169" fill="#606476" opacity="0.15"/><rect x="519.1" y="6" width="1.8" height="169" fill="#606476" opacity="0.12"/><rect x="524.6" y="6" width="2.0" height="169" fill="#E4E6EE" opacity="0.29"/><rect x="530.0" y="6" width="2.4" height="169" fill="#606476" opacity="0.21"/><rect x="536.3" y="6" width="2.4" height="169" fill="#606476" opacity="0.14"/><rect x="543.0" y="6" width="1.3" height="169" fill="#E4E6EE" opacity="0.30"/><rect x="546.5" y="6" width="1.4" height="169" fill="#E4E6EE" opacity="0.17"/><rect x="549.9" y="6" width="2.3" height="169" fill="#606476" opacity="0.22"/><rect x="553.4" y="6" width="1.6" height="169" fill="#E4E6EE" opacity="0.12"/><rect x="557.2" y="6" width="2.1" height="169" fill="#E4E6EE" opacity="0.31"/><rect x="560.7" y="6" width="1.8" height="169" fill="#E4E6EE" opacity="0.22"/><rect x="566.4" y="6" width="1.3" height="169" fill="#606476" opacity="0.10"/><rect x="569.6" y="6" width="1.9" height="169" fill="#E4E6EE" opacity="0.23"/></g><rect x="22" y="2" width="2" height="3" fill="#505460" opacity="0.45"/><rect x="26" y="2" width="2" height="3" fill="#505460" opacity="0.80"/><rect x="33" y="2" width="2" height="3" fill="#505460" opacity="0.63"/><rect x="37" y="2" width="4" height="3" fill="#505460" opacity="0.58"/><rect x="44" y="2" width="3" height="3" fill="#505460" opacity="0.56"/><rect x="49" y="2" width="3" height="3" fill="#505460" opacity="0.57"/><rect x="55" y="2" width="2" height="3" fill="#505460" opacity="0.65"/><rect x="58" y="2" width="2" height="3" fill="#505460" opacity="0.47"/><rect x="64" y="2" width="4" height="3" fill="#505460" opacity="0.55"/><rect x="71" y="2" width="4" height="3" fill="#505460" opacity="0.47"/><rect x="77" y="2" width="2" height="3" fill="#505460" opacity="0.53"/><rect x="80" y="2" width="4" height="3" fill="#505460" opacity="0.75"/><rect x="88" y="2" width="3" height="3" fill="#505460" opacity="0.63"/><rect x="92" y="2" width="4" height="3" fill="#505460" opacity="0.79"/><rect x="99" y="2" width="3" height="3" fill="#505460" opacity="0.51"/><rect x="102" y="2" width="4" height="3" fill="#505460" opacity="0.71"/><rect x="109" y="2" width="3" height="3" fill="#505460" opacity="0.45"/><rect x="114" y="2" width="4" height="3" fill="#505460" opacity="0.68"/><rect x="121" y="2" width="2" height="3" fill="#505460" opacity="0.56"/><rect x="127" y="2" width="2" height="3" fill="#505460" opacity="0.72"/><rect x="132" y="2" width="2" height="3" fill="#505460" opacity="0.40"/><rect x="137" y="2" width="4" height="3" fill="#505460" opacity="0.76"/><rect x="140" y="2" width="3" height="3" fill="#505460" opacity="0.78"/><rect x="146" y="2" width="3" height="3" fill="#505460" opacity="0.49"/><rect x="151" y="2" width="2" height="3" fill="#505460" opacity="0.61"/><rect x="156" y="2" width="3" height="3" fill="#505460" opacity="0.66"/><rect x="163" y="2" width="3" height="3" fill="#505460" opacity="0.79"/><rect x="166" y="2" width="4" height="3" fill="#505460" opacity="0.44"/><rect x="170" y="2" width="3" height="3" fill="#505460" opacity="0.56"/><rect x="173" y="2" width="2" height="3" fill="#505460" opacity="0.66"/><rect x="176" y="2" width="3" height="3" fill="#505460" opacity="0.50"/><rect x="184" y="2" width="4" height="3" fill="#505460" opacity="0.62"/><rect x="189" y="2" width="4" height="3" fill="#505460" opacity="0.63"/><rect x="197" y="2" width="4" height="3" fill="#505460" opacity="0.58"/><rect x="203" y="2" width="4" height="3" fill="#505460" opacity="0.64"/><rect x="210" y="2" width="2" height="3" fill="#505460" opacity="0.55"/><rect x="218" y="2" width="3" height="3" fill="#505460" opacity="0.59"/><rect x="222" y="2" width="3" height="3" fill="#505460" opacity="0.62"/><rect x="228" y="2" width="3" height="3" fill="#505460" opacity="0.78"/><rect x="233" y="2" width="4" height="3" fill="#505460" opacity="0.56"/><rect x="237" y="2" width="4" height="3" fill="#505460" opacity="0.51"/><rect x="243" y="2" width="4" height="3" fill="#505460" opacity="0.77"/><rect x="250" y="2" width="4" height="3" fill="#505460" opacity="0.52"/><rect x="253" y="2" width="2" height="3" fill="#505460" opacity="0.63"/><rect x="259" y="2" width="3" height="3" fill="#505460" opacity="0.70"/><rect x="264" y="2" width="3" height="3" fill="#505460" opacity="0.70"/><rect x="267" y="2" width="4" height="3" fill="#505460" opacity="0.78"/><rect x="271" y="2" width="2" height="3" fill="#505460" opacity="0.57"/><rect x="276" y="2" width="2" height="3" fill="#505460" opacity="0.42"/><rect x="279" y="2" width="4" height="3" fill="#505460" opacity="0.76"/><rect x="283" y="2" width="2" height="3" fill="#505460" opacity="0.64"/><rect x="287" y="2" width="4" height="3" fill="#505460" opacity="0.57"/><rect x="290" y="2" width="2" height="3" fill="#505460" opacity="0.54"/><rect x="294" y="2" width="3" height="3" fill="#505460" opacity="0.58"/><rect x="300" y="2" width="3" height="3" fill="#505460" opacity="0.64"/><rect x="307" y="2" width="4" height="3" fill="#505460" opacity="0.57"/><rect x="314" y="2" width="4" height="3" fill="#505460" opacity="0.73"/><rect x="317" y="2" width="3" height="3" fill="#505460" opacity="0.69"/><rect x="321" y="2" width="2" height="3" fill="#505460" opacity="0.60"/><rect x="326" y="2" width="4" height="3" fill="#505460" opacity="0.65"/><rect x="331" y="2" width="3" height="3" fill="#505460" opacity="0.64"/><rect x="337" y="2" width="4" height="3" fill="#505460" opacity="0.64"/><rect x="344" y="2" width="2" height="3" fill="#505460" opacity="0.48"/><rect x="348" y="2" width="4" height="3" fill="#505460" opacity="0.77"/><rect x="355" y="2" width="2" height="3" fill="#505460" opacity="0.65"/><rect x="358" y="2" width="3" height="3" fill="#505460" opacity="0.57"/><rect x="364" y="2" width="2" height="3" fill="#505460" opacity="0.49"/><rect x="369" y="2" width="2" height="3" fill="#505460" opacity="0.77"/><rect x="373" y="2" width="2" height="3" fill="#505460" opacity="0.65"/><rect x="377" y="2" width="3" height="3" fill="#505460" opacity="0.54"/><rect x="382" y="2" width="3" height="3" fill="#505460" opacity="0.70"/><rect x="389" y="2" width="2" height="3" fill="#505460" opacity="0.72"/><rect x="395" y="2" width="4" height="3" fill="#505460" opacity="0.74"/><rect x="401" y="2" width="3" height="3" fill="#505460" opacity="0.57"/><rect x="406" y="2" width="2" height="3" fill="#505460" opacity="0.55"/><rect x="412" y="2" width="4" height="3" fill="#505460" opacity="0.53"/><rect x="418" y="2" width="4" height="3" fill="#505460" opacity="0.73"/><rect x="422" y="2" width="4" height="3" fill="#505460" opacity="0.55"/><rect x="425" y="2" width="3" height="3" fill="#505460" opacity="0.43"/><rect x="429" y="2" width="4" height="3" fill="#505460" opacity="0.63"/><rect x="436" y="2" width="3" height="3" fill="#505460" opacity="0.52"/><rect x="442" y="2" width="2" height="3" fill="#505460" opacity="0.52"/><rect x="450" y="2" width="4" height="3" fill="#505460" opacity="0.43"/><rect x="455" y="2" width="4" height="3" fill="#505460" opacity="0.71"/><rect x="459" y="2" width="2" height="3" fill="#505460" opacity="0.49"/><rect x="465" y="2" width="3" height="3" fill="#505460" opacity="0.55"/><rect x="469" y="2" width="4" height="3" fill="#505460" opacity="0.58"/><rect x="475" y="2" width="4" height="3" fill="#505460" opacity="0.77"/><rect x="480" y="2" width="3" height="3" fill="#505460" opacity="0.58"/><rect x="484" y="2" width="4" height="3" fill="#505460" opacity="0.76"/><rect x="489" y="2" width="3" height="3" fill="#505460" opacity="0.73"/><rect x="492" y="2" width="4" height="3" fill="#505460" opacity="0.56"/><rect x="497" y="2" width="2" height="3" fill="#505460" opacity="0.70"/><rect x="501" y="2" width="3" height="3" fill="#505460" opacity="0.62"/><rect x="509" y="2" width="4" height="3" fill="#505460" opacity="0.47"/><rect x="512" y="2" width="3" height="3" fill="#505460" opacity="0.75"/><rect x="517" y="2" width="2" height="3" fill="#505460" opacity="0.49"/><rect x="520" y="2" width="2" height="3" fill="#505460" opacity="0.63"/><rect x="528" y="2" width="4" height="3" fill="#505460" opacity="0.74"/><rect x="533" y="2" width="4" height="3" fill="#505460" opacity="0.62"/><rect x="540" y="2" width="2" height="3" fill="#505460" opacity="0.53"/><rect x="544" y="2" width="2" height="3" fill="#505460" opacity="0.76"/><rect x="547" y="2" width="4" height="3" fill="#505460" opacity="0.66"/><rect x="551" y="2" width="4" height="3" fill="#505460" opacity="0.57"/><rect x="558" y="2" width="3" height="3" fill="#505460" opacity="0.71"/><rect x="563" y="2" width="3" height="3" fill="#505460" opacity="0.56"/><rect x="568" y="2" width="3" height="3" fill="#505460" opacity="0.67"/><rect x="22" y="6" width="4" height="3" fill="#505460" opacity="0.72"/><rect x="25" y="6" width="4" height="3" fill="#505460" opacity="0.77"/><rect x="30" y="6" width="4" height="3" fill="#505460" opacity="0.54"/><rect x="33" y="6" width="3" height="3" fill="#505460" opacity="0.73"/><rect x="41" y="6" width="4" height="3" fill="#505460" opacity="0.66"/><rect x="46" y="6" width="4" height="3" fill="#505460" opacity="0.40"/><rect x="50" y="6" width="3" height="3" fill="#505460" opacity="0.77"/><rect x="54" y="6" width="2" height="3" fill="#505460" opacity="0.80"/><rect x="59" y="6" width="2" height="3" fill="#505460" opacity="0.53"/><rect x="64" y="6" width="4" height="3" fill="#505460" opacity="0.52"/><rect x="72" y="6" width="2" height="3" fill="#505460" opacity="0.59"/><rect x="79" y="6" width="3" height="3" fill="#505460" opacity="0.66"/><rect x="85" y="6" width="2" height="3" fill="#505460" opacity="0.76"/><rect x="92" y="6" width="2" height="3" fill="#505460" opacity="0.63"/><rect x="100" y="6" width="2" height="3" fill="#505460" opacity="0.53"/><rect x="104" y="6" width="3" height="3" fill="#505460" opacity="0.49"/><rect x="108" y="6" width="4" height="3" fill="#505460" opacity="0.59"/><rect x="114" y="6" width="3" height="3" fill="#505460" opacity="0.47"/><rect x="118" y="6" width="2" height="3" fill="#505460" opacity="0.76"/><rect x="126" y="6" width="4" height="3" fill="#505460" opacity="0.62"/><rect x="133" y="6" width="3" height="3" fill="#505460" opacity="0.74"/><rect x="138" y="6" width="3" height="3" fill="#505460" opacity="0.77"/><rect x="143" y="6" width="4" height="3" fill="#505460" opacity="0.71"/><rect x="146" y="6" width="2" height="3" fill="#505460" opacity="0.56"/><rect x="150" y="6" width="2" height="3" fill="#505460" opacity="0.72"/><rect x="155" y="6" width="4" height="3" fill="#505460" opacity="0.72"/><rect x="162" y="6" width="2" height="3" fill="#505460" opacity="0.66"/><rect x="166" y="6" width="2" height="3" fill="#505460" opacity="0.75"/><rect x="174" y="6" width="3" height="3" fill="#505460" opacity="0.72"/><rect x="180" y="6" width="4" height="3" fill="#505460" opacity="0.75"/><rect x="186" y="6" width="3" height="3" fill="#505460" opacity="0.46"/><rect x="193" y="6" width="4" height="3" fill="#505460" opacity="0.45"/><rect x="200" y="6" width="4" height="3" fill="#505460" opacity="0.51"/><rect x="205" y="6" width="2" height="3" fill="#505460" opacity="0.63"/><rect x="209" y="6" width="2" height="3" fill="#505460" opacity="0.73"/><rect x="217" y="6" width="2" height="3" fill="#505460" opacity="0.43"/><rect x="221" y="6" width="4" height="3" fill="#505460" opacity="0.61"/><rect x="228" y="6" width="4" height="3" fill="#505460" opacity="0.59"/><rect x="236" y="6" width="4" height="3" fill="#505460" opacity="0.62"/><rect x="242" y="6" width="2" height="3" fill="#505460" opacity="0.72"/><rect x="247" y="6" width="4" height="3" fill="#505460" opacity="0.44"/><rect x="254" y="6" width="2" height="3" fill="#505460" opacity="0.41"/><rect x="259" y="6" width="3" height="3" fill="#505460" opacity="0.46"/><rect x="266" y="6" width="3" height="3" fill="#505460" opacity="0.53"/><rect x="271" y="6" width="4" height="3" fill="#505460" opacity="0.52"/><rect x="276" y="6" width="4" height="3" fill="#505460" opacity="0.43"/><rect x="280" y="6" width="2" height="3" fill="#505460" opacity="0.44"/><rect x="285" y="6" width="3" height="3" fill="#505460" opacity="0.70"/><rect x="292" y="6" width="2" height="3" fill="#505460" opacity="0.66"/><rect x="295" y="6" width="3" height="3" fill="#505460" opacity="0.68"/><rect x="300" y="6" width="3" height="3" fill="#505460" opacity="0.63"/><rect x="305" y="6" width="2" height="3" fill="#505460" opacity="0.74"/><rect x="313" y="6" width="4" height="3" fill="#505460" opacity="0.48"/><rect x="319" y="6" width="3" height="3" fill="#505460" opacity="0.65"/><rect x="326" y="6" width="4" height="3" fill="#505460" opacity="0.52"/><rect x="331" y="6" width="3" height="3" fill="#505460" opacity="0.62"/><rect x="335" y="6" width="2" height="3" fill="#505460" opacity="0.48"/><rect x="341" y="6" width="3" height="3" fill="#505460" opacity="0.52"/><rect x="346" y="6" width="3" height="3" fill="#505460" opacity="0.69"/><rect x="350" y="6" width="3" height="3" fill="#505460" opacity="0.44"/><rect x="354" y="6" width="2" height="3" fill="#505460" opacity="0.45"/><rect x="360" y="6" width="2" height="3" fill="#505460" opacity="0.47"/><rect x="365" y="6" width="3" height="3" fill="#505460" opacity="0.64"/><rect x="369" y="6" width="2" height="3" fill="#505460" opacity="0.41"/><rect x="377" y="6" width="3" height="3" fill="#505460" opacity="0.56"/><rect x="380" y="6" width="3" height="3" fill="#505460" opacity="0.77"/><rect x="384" y="6" width="2" height="3" fill="#505460" opacity="0.71"/><rect x="391" y="6" width="3" height="3" fill="#505460" opacity="0.59"/><rect x="398" y="6" width="4" height="3" fill="#505460" opacity="0.41"/><rect x="403" y="6" width="4" height="3" fill="#505460" opacity="0.53"/><rect x="410" y="6" width="2" height="3" fill="#505460" opacity="0.66"/><rect x="416" y="6" width="2" height="3" fill="#505460" opacity="0.50"/><rect x="420" y="6" width="3" height="3" fill="#505460" opacity="0.66"/><rect x="424" y="6" width="3" height="3" fill="#505460" opacity="0.48"/><rect x="428" y="6" width="3" height="3" fill="#505460" opacity="0.73"/><rect x="434" y="6" width="2" height="3" fill="#505460" opacity="0.50"/><rect x="440" y="6" width="3" height="3" fill="#505460" opacity="0.62"/><rect x="445" y="6" width="4" height="3" fill="#505460" opacity="0.61"/><rect x="451" y="6" width="2" height="3" fill="#505460" opacity="0.79"/><rect x="456" y="6" width="4" height="3" fill="#505460" opacity="0.68"/><rect x="464" y="6" width="4" height="3" fill="#505460" opacity="0.78"/><rect x="470" y="6" width="2" height="3" fill="#505460" opacity="0.71"/><rect x="474" y="6" width="3" height="3" fill="#505460" opacity="0.63"/><rect x="480" y="6" width="3" height="3" fill="#505460" opacity="0.44"/><rect x="488" y="6" width="3" height="3" fill="#505460" opacity="0.59"/><rect x="491" y="6" width="4" height="3" fill="#505460" opacity="0.45"/><rect x="499" y="6" width="4" height="3" fill="#505460" opacity="0.62"/><rect x="502" y="6" width="3" height="3" fill="#505460" opacity="0.47"/><rect x="509" y="6" width="3" height="3" fill="#505460" opacity="0.64"/><rect x="513" y="6" width="2" height="3" fill="#505460" opacity="0.52"/><rect x="520" y="6" width="2" height="3" fill="#505460" opacity="0.70"/><rect x="525" y="6" width="2" height="3" fill="#505460" opacity="0.47"/><rect x="531" y="6" width="2" height="3" fill="#505460" opacity="0.58"/><rect x="536" y="6" width="4" height="3" fill="#505460" opacity="0.46"/><rect x="542" y="6" width="4" height="3" fill="#505460" opacity="0.76"/><rect x="548" y="6" width="4" height="3" fill="#505460" opacity="0.72"/><rect x="552" y="6" width="2" height="3" fill="#505460" opacity="0.56"/><rect x="555" y="6" width="4" height="3" fill="#505460" opacity="0.55"/><rect x="561" y="6" width="2" height="3" fill="#505460" opacity="0.53"/><rect x="564" y="6" width="2" height="3" fill="#505460" opacity="0.63"/><rect x="569" y="6" width="4" height="3" fill="#505460" opacity="0.71"/><rect x="22" y="173" width="2" height="3" fill="#505460" opacity="0.56"/><rect x="27" y="173" width="2" height="3" fill="#505460" opacity="0.59"/><rect x="33" y="173" width="4" height="3" fill="#505460" opacity="0.77"/><rect x="38" y="173" width="3" height="3" fill="#505460" opacity="0.70"/><rect x="44" y="173" width="3" height="3" fill="#505460" opacity="0.74"/><rect x="51" y="173" width="3" height="3" fill="#505460" opacity="0.73"/><rect x="55" y="173" width="2" height="3" fill="#505460" opacity="0.76"/><rect x="60" y="173" width="4" height="3" fill="#505460" opacity="0.61"/><rect x="65" y="173" width="2" height="3" fill="#505460" opacity="0.53"/><rect x="69" y="173" width="4" height="3" fill="#505460" opacity="0.65"/><rect x="74" y="173" width="3" height="3" fill="#505460" opacity="0.64"/><rect x="81" y="173" width="3" height="3" fill="#505460" opacity="0.75"/><rect x="88" y="173" width="2" height="3" fill="#505460" opacity="0.45"/><rect x="93" y="173" width="4" height="3" fill="#505460" opacity="0.75"/><rect x="101" y="173" width="3" height="3" fill="#505460" opacity="0.68"/><rect x="107" y="173" width="2" height="3" fill="#505460" opacity="0.62"/><rect x="113" y="173" width="2" height="3" fill="#505460" opacity="0.75"/><rect x="121" y="173" width="4" height="3" fill="#505460" opacity="0.79"/><rect x="127" y="173" width="4" height="3" fill="#505460" opacity="0.57"/><rect x="134" y="173" width="2" height="3" fill="#505460" opacity="0.66"/><rect x="139" y="173" width="2" height="3" fill="#505460" opacity="0.76"/><rect x="143" y="173" width="2" height="3" fill="#505460" opacity="0.45"/><rect x="149" y="173" width="3" height="3" fill="#505460" opacity="0.40"/><rect x="153" y="173" width="3" height="3" fill="#505460" opacity="0.41"/><rect x="157" y="173" width="3" height="3" fill="#505460" opacity="0.76"/><rect x="164" y="173" width="3" height="3" fill="#505460" opacity="0.46"/><rect x="170" y="173" width="2" height="3" fill="#505460" opacity="0.42"/><rect x="173" y="173" width="3" height="3" fill="#505460" opacity="0.52"/><rect x="179" y="173" width="3" height="3" fill="#505460" opacity="0.75"/><rect x="183" y="173" width="4" height="3" fill="#505460" opacity="0.76"/><rect x="187" y="173" width="3" height="3" fill="#505460" opacity="0.76"/><rect x="190" y="173" width="4" height="3" fill="#505460" opacity="0.75"/><rect x="198" y="173" width="2" height="3" fill="#505460" opacity="0.61"/><rect x="202" y="173" width="2" height="3" fill="#505460" opacity="0.66"/><rect x="207" y="173" width="3" height="3" fill="#505460" opacity="0.78"/><rect x="211" y="173" width="3" height="3" fill="#505460" opacity="0.69"/><rect x="215" y="173" width="4" height="3" fill="#505460" opacity="0.78"/><rect x="222" y="173" width="3" height="3" fill="#505460" opacity="0.43"/><rect x="226" y="173" width="3" height="3" fill="#505460" opacity="0.45"/><rect x="232" y="173" width="3" height="3" fill="#505460" opacity="0.47"/><rect x="236" y="173" width="4" height="3" fill="#505460" opacity="0.52"/><rect x="241" y="173" width="4" height="3" fill="#505460" opacity="0.61"/><rect x="244" y="173" width="4" height="3" fill="#505460" opacity="0.49"/><rect x="249" y="173" width="2" height="3" fill="#505460" opacity="0.67"/><rect x="253" y="173" width="4" height="3" fill="#505460" opacity="0.67"/><rect x="258" y="173" width="2" height="3" fill="#505460" opacity="0.58"/><rect x="264" y="173" width="4" height="3" fill="#505460" opacity="0.76"/><rect x="267" y="173" width="4" height="3" fill="#505460" opacity="0.51"/><rect x="271" y="173" width="4" height="3" fill="#505460" opacity="0.43"/><rect x="276" y="173" width="2" height="3" fill="#505460" opacity="0.50"/><rect x="280" y="173" width="4" height="3" fill="#505460" opacity="0.41"/><rect x="287" y="173" width="2" height="3" fill="#505460" opacity="0.80"/><rect x="290" y="173" width="3" height="3" fill="#505460" opacity="0.77"/><rect x="296" y="173" width="2" height="3" fill="#505460" opacity="0.77"/><rect x="302" y="173" width="2" height="3" fill="#505460" opacity="0.43"/><rect x="309" y="173" width="3" height="3" fill="#505460" opacity="0.53"/><rect x="314" y="173" width="2" height="3" fill="#505460" opacity="0.61"/><rect x="320" y="173" width="4" height="3" fill="#505460" opacity="0.67"/><rect x="325" y="173" width="4" height="3" fill="#505460" opacity="0.47"/><rect x="332" y="173" width="2" height="3" fill="#505460" opacity="0.44"/><rect x="337" y="173" width="4" height="3" fill="#505460" opacity="0.58"/><rect x="344" y="173" width="4" height="3" fill="#505460" opacity="0.72"/><rect x="348" y="173" width="3" height="3" fill="#505460" opacity="0.62"/><rect x="356" y="173" width="4" height="3" fill="#505460" opacity="0.60"/><rect x="359" y="173" width="4" height="3" fill="#505460" opacity="0.79"/><rect x="362" y="173" width="3" height="3" fill="#505460" opacity="0.75"/><rect x="366" y="173" width="2" height="3" fill="#505460" opacity="0.64"/><rect x="372" y="173" width="3" height="3" fill="#505460" opacity="0.60"/><rect x="379" y="173" width="2" height="3" fill="#505460" opacity="0.43"/><rect x="386" y="173" width="4" height="3" fill="#505460" opacity="0.66"/><rect x="392" y="173" width="4" height="3" fill="#505460" opacity="0.50"/><rect x="396" y="173" width="3" height="3" fill="#505460" opacity="0.57"/><rect x="402" y="173" width="4" height="3" fill="#505460" opacity="0.70"/><rect x="409" y="173" width="4" height="3" fill="#505460" opacity="0.60"/><rect x="415" y="173" width="4" height="3" fill="#505460" opacity="0.47"/><rect x="420" y="173" width="2" height="3" fill="#505460" opacity="0.60"/><rect x="426" y="173" width="4" height="3" fill="#505460" opacity="0.71"/><rect x="429" y="173" width="3" height="3" fill="#505460" opacity="0.59"/><rect x="436" y="173" width="4" height="3" fill="#505460" opacity="0.79"/><rect x="439" y="173" width="3" height="3" fill="#505460" opacity="0.70"/><rect x="445" y="173" width="2" height="3" fill="#505460" opacity="0.46"/><rect x="450" y="173" width="4" height="3" fill="#505460" opacity="0.79"/><rect x="453" y="173" width="3" height="3" fill="#505460" opacity="0.76"/><rect x="457" y="173" width="3" height="3" fill="#505460" opacity="0.62"/><rect x="462" y="173" width="2" height="3" fill="#505460" opacity="0.79"/><rect x="469" y="173" width="4" height="3" fill="#505460" opacity="0.71"/><rect x="475" y="173" width="2" height="3" fill="#505460" opacity="0.52"/><rect x="479" y="173" width="2" height="3" fill="#505460" opacity="0.57"/><rect x="482" y="173" width="2" height="3" fill="#505460" opacity="0.55"/><rect x="487" y="173" width="4" height="3" fill="#505460" opacity="0.49"/><rect x="491" y="173" width="4" height="3" fill="#505460" opacity="0.66"/><rect x="494" y="173" width="3" height="3" fill="#505460" opacity="0.63"/><rect x="502" y="173" width="4" height="3" fill="#505460" opacity="0.77"/><rect x="506" y="173" width="3" height="3" fill="#505460" opacity="0.77"/><rect x="510" y="173" width="3" height="3" fill="#505460" opacity="0.71"/><rect x="514" y="173" width="3" height="3" fill="#505460" opacity="0.50"/><rect x="521" y="173" width="2" height="3" fill="#505460" opacity="0.59"/><rect x="526" y="173" width="4" height="3" fill="#505460" opacity="0.59"/><rect x="530" y="173" width="3" height="3" fill="#505460" opacity="0.60"/><rect x="536" y="173" width="2" height="3" fill="#505460" opacity="0.75"/><rect x="540" y="173" width="3" height="3" fill="#505460" opacity="0.57"/><rect x="544" y="173" width="3" height="3" fill="#505460" opacity="0.55"/><rect x="548" y="173" width="2" height="3" fill="#505460" opacity="0.61"/><rect x="555" y="173" width="4" height="3" fill="#505460" opacity="0.56"/><rect x="562" y="173" width="4" height="3" fill="#505460" opacity="0.49"/><rect x="566" y="173" width="2" height="3" fill="#505460" opacity="0.46"/><rect x="22" y="177" width="3" height="3" fill="#505460" opacity="0.45"/><rect x="26" y="177" width="2" height="3" fill="#505460" opacity="0.41"/><rect x="31" y="177" width="3" height="3" fill="#505460" opacity="0.58"/><rect x="38" y="177" width="3" height="3" fill="#505460" opacity="0.53"/><rect x="45" y="177" width="4" height="3" fill="#505460" opacity="0.67"/><rect x="49" y="177" width="4" height="3" fill="#505460" opacity="0.50"/><rect x="53" y="177" width="2" height="3" fill="#505460" opacity="0.61"/><rect x="56" y="177" width="2" height="3" fill="#505460" opacity="0.52"/><rect x="61" y="177" width="4" height="3" fill="#505460" opacity="0.68"/><rect x="67" y="177" width="4" height="3" fill="#505460" opacity="0.50"/><rect x="74" y="177" width="4" height="3" fill="#505460" opacity="0.55"/><rect x="81" y="177" width="3" height="3" fill="#505460" opacity="0.61"/><rect x="86" y="177" width="2" height="3" fill="#505460" opacity="0.55"/><rect x="94" y="177" width="2" height="3" fill="#505460" opacity="0.44"/><rect x="98" y="177" width="4" height="3" fill="#505460" opacity="0.49"/><rect x="102" y="177" width="2" height="3" fill="#505460" opacity="0.70"/><rect x="107" y="177" width="2" height="3" fill="#505460" opacity="0.72"/><rect x="115" y="177" width="3" height="3" fill="#505460" opacity="0.66"/><rect x="118" y="177" width="2" height="3" fill="#505460" opacity="0.62"/><rect x="123" y="177" width="2" height="3" fill="#505460" opacity="0.78"/><rect x="130" y="177" width="2" height="3" fill="#505460" opacity="0.71"/><rect x="135" y="177" width="3" height="3" fill="#505460" opacity="0.45"/><rect x="140" y="177" width="3" height="3" fill="#505460" opacity="0.55"/><rect x="145" y="177" width="3" height="3" fill="#505460" opacity="0.68"/><rect x="149" y="177" width="3" height="3" fill="#505460" opacity="0.48"/><rect x="156" y="177" width="3" height="3" fill="#505460" opacity="0.67"/><rect x="160" y="177" width="2" height="3" fill="#505460" opacity="0.70"/><rect x="167" y="177" width="2" height="3" fill="#505460" opacity="0.59"/><rect x="172" y="177" width="4" height="3" fill="#505460" opacity="0.52"/><rect x="179" y="177" width="3" height="3" fill="#505460" opacity="0.45"/><rect x="187" y="177" width="3" height="3" fill="#505460" opacity="0.51"/><rect x="192" y="177" width="4" height="3" fill="#505460" opacity="0.52"/><rect x="198" y="177" width="3" height="3" fill="#505460" opacity="0.43"/><rect x="202" y="177" width="3" height="3" fill="#505460" opacity="0.76"/><rect x="207" y="177" width="3" height="3" fill="#505460" opacity="0.73"/><rect x="215" y="177" width="4" height="3" fill="#505460" opacity="0.59"/><rect x="221" y="177" width="3" height="3" fill="#505460" opacity="0.41"/><rect x="227" y="177" width="2" height="3" fill="#505460" opacity="0.71"/><rect x="234" y="177" width="4" height="3" fill="#505460" opacity="0.62"/><rect x="240" y="177" width="2" height="3" fill="#505460" opacity="0.51"/><rect x="247" y="177" width="3" height="3" fill="#505460" opacity="0.55"/><rect x="254" y="177" width="2" height="3" fill="#505460" opacity="0.72"/><rect x="261" y="177" width="3" height="3" fill="#505460" opacity="0.52"/><rect x="266" y="177" width="2" height="3" fill="#505460" opacity="0.46"/><rect x="270" y="177" width="2" height="3" fill="#505460" opacity="0.50"/><rect x="274" y="177" width="4" height="3" fill="#505460" opacity="0.40"/><rect x="279" y="177" width="3" height="3" fill="#505460" opacity="0.40"/><rect x="285" y="177" width="4" height="3" fill="#505460" opacity="0.71"/><rect x="288" y="177" width="4" height="3" fill="#505460" opacity="0.75"/><rect x="295" y="177" width="3" height="3" fill="#505460" opacity="0.51"/><rect x="298" y="177" width="2" height="3" fill="#505460" opacity="0.53"/><rect x="305" y="177" width="4" height="3" fill="#505460" opacity="0.56"/><rect x="309" y="177" width="2" height="3" fill="#505460" opacity="0.73"/><rect x="313" y="177" width="4" height="3" fill="#505460" opacity="0.68"/><rect x="320" y="177" width="3" height="3" fill="#505460" opacity="0.55"/><rect x="324" y="177" width="4" height="3" fill="#505460" opacity="0.67"/><rect x="330" y="177" width="4" height="3" fill="#505460" opacity="0.50"/><rect x="334" y="177" width="2" height="3" fill="#505460" opacity="0.77"/><rect x="341" y="177" width="2" height="3" fill="#505460" opacity="0.80"/><rect x="348" y="177" width="4" height="3" fill="#505460" opacity="0.52"/><rect x="355" y="177" width="4" height="3" fill="#505460" opacity="0.71"/><rect x="361" y="177" width="2" height="3" fill="#505460" opacity="0.65"/><rect x="366" y="177" width="3" height="3" fill="#505460" opacity="0.42"/><rect x="370" y="177" width="4" height="3" fill="#505460" opacity="0.70"/><rect x="376" y="177" width="3" height="3" fill="#505460" opacity="0.69"/><rect x="381" y="177" width="4" height="3" fill="#505460" opacity="0.67"/><rect x="385" y="177" width="2" height="3" fill="#505460" opacity="0.74"/><rect x="392" y="177" width="4" height="3" fill="#505460" opacity="0.79"/><rect x="398" y="177" width="2" height="3" fill="#505460" opacity="0.65"/><rect x="405" y="177" width="2" height="3" fill="#505460" opacity="0.45"/><rect x="410" y="177" width="4" height="3" fill="#505460" opacity="0.52"/><rect x="416" y="177" width="2" height="3" fill="#505460" opacity="0.59"/><rect x="423" y="177" width="2" height="3" fill="#505460" opacity="0.51"/><rect x="427" y="177" width="3" height="3" fill="#505460" opacity="0.65"/><rect x="432" y="177" width="4" height="3" fill="#505460" opacity="0.80"/><rect x="435" y="177" width="4" height="3" fill="#505460" opacity="0.80"/><rect x="443" y="177" width="2" height="3" fill="#505460" opacity="0.51"/><rect x="449" y="177" width="2" height="3" fill="#505460" opacity="0.56"/><rect x="457" y="177" width="4" height="3" fill="#505460" opacity="0.74"/><rect x="461" y="177" width="2" height="3" fill="#505460" opacity="0.52"/><rect x="468" y="177" width="4" height="3" fill="#505460" opacity="0.51"/><rect x="473" y="177" width="4" height="3" fill="#505460" opacity="0.56"/><rect x="476" y="177" width="4" height="3" fill="#505460" opacity="0.56"/><rect x="483" y="177" width="4" height="3" fill="#505460" opacity="0.51"/><rect x="490" y="177" width="3" height="3" fill="#505460" opacity="0.47"/><rect x="494" y="177" width="3" height="3" fill="#505460" opacity="0.75"/><rect x="499" y="177" width="2" height="3" fill="#505460" opacity="0.53"/><rect x="502" y="177" width="4" height="3" fill="#505460" opacity="0.63"/><rect x="506" y="177" width="3" height="3" fill="#505460" opacity="0.51"/><rect x="510" y="177" width="3" height="3" fill="#505460" opacity="0.48"/><rect x="516" y="177" width="4" height="3" fill="#505460" opacity="0.42"/><rect x="520" y="177" width="3" height="3" fill="#505460" opacity="0.67"/><rect x="523" y="177" width="3" height="3" fill="#505460" opacity="0.59"/><rect x="531" y="177" width="2" height="3" fill="#505460" opacity="0.80"/><rect x="536" y="177" width="2" height="3" fill="#505460" opacity="0.57"/><rect x="543" y="177" width="3" height="3" fill="#505460" opacity="0.62"/><rect x="547" y="177" width="4" height="3" fill="#505460" opacity="0.66"/><rect x="553" y="177" width="3" height="3" fill="#505460" opacity="0.48"/><rect x="557" y="177" width="2" height="3" fill="#505460" opacity="0.80"/><rect x="562" y="177" width="4" height="3" fill="#505460" opacity="0.42"/><rect x="570" y="177" width="2" height="3" fill="#505460" opacity="0.62"/><rect x="22" y="63" width="551" height="48" fill="#D4CEA0" opacity="0.35"/><g filter="url(#pb)"><rect x="261" y="64" width="312" height="7" fill="#E8DA78" opacity="0.75"/><rect x="121" y="65" width="140" height="5" fill="#E0D48C" opacity="0.45"/><rect x="270.0" y="107" width="3" height="4" fill="#D8C888" opacity="0.8"/><rect x="274.5" y="107" width="3" height="4" fill="#D8C888" opacity="0.8"/><rect x="279.0" y="107" width="3" height="4" fill="#D8C888" opacity="0.8"/><rect x="283.5" y="107" width="3" height="4" fill="#D8C888" opacity="0.8"/><rect x="288.0" y="107" width="3" height="4" fill="#D8C888" opacity="0.8"/><rect x="292.5" y="107" width="3" height="4" fill="#D8C888" opacity="0.8"/><rect x="297.0" y="107" width="3" height="4" fill="#D8C888" opacity="0.8"/><rect x="301.5" y="107" width="3" height="4" fill="#D8C888" opacity="0.8"/><rect x="306.0" y="107" width="3" height="4" fill="#D8C888" opacity="0.8"/><rect x="310.5" y="107" width="3" height="4" fill="#D8C888" opacity="0.8"/><rect x="315.0" y="107" width="3" height="4" fill="#D8C888" opacity="0.8"/><rect x="319.5" y="107" width="3" height="4" fill="#D8C888" opacity="0.8"/><rect x="324.0" y="107" width="3" height="4" fill="#D8C888" opacity="0.8"/><rect x="328.5" y="107" width="3" height="4" fill="#D8C888" opacity="0.8"/><rect x="333.0" y="107" width="3" height="4" fill="#D8C888" opacity="0.8"/><rect x="337.5" y="107" width="3" height="4" fill="#D8C888" opacity="0.8"/><rect x="342.0" y="107" width="3" height="4" fill="#D8C888" opacity="0.8"/><rect x="346.5" y="107" width="3" height="4" fill="#D8C888" opacity="0.8"/><rect x="351.0" y="107" width="3" height="4" fill="#D8C888" opacity="0.8"/><rect x="355.5" y="107" width="3" height="4" fill="#D8C888" opacity="0.8"/><rect x="360.0" y="107" width="3" height="4" fill="#D8C888" opacity="0.8"/><rect x="364.5" y="107" width="3" height="4" fill="#D8C888" opacity="0.8"/><rect x="369.0" y="107" width="3" height="4" fill="#D8C888" opacity="0.8"/><rect x="373.5" y="107" width="3" height="4" fill="#D8C888" opacity="0.8"/><rect x="378.0" y="107" width="3" height="4" fill="#D8C888" opacity="0.8"/><rect x="382.5" y="107" width="3" height="4" fill="#D8C888" opacity="0.8"/><rect x="387.0" y="107" width="3" height="4" fill="#D8C888" opacity="0.8"/><rect x="391.5" y="107" width="3" height="4" fill="#D8C888" opacity="0.8"/><rect x="396.0" y="107" width="3" height="4" fill="#D8C888" opacity="0.8"/><rect x="400.5" y="107" width="3" height="4" fill="#D8C888" opacity="0.8"/><rect x="405.0" y="107" width="3" height="4" fill="#D8C888" opacity="0.8"/><rect x="409.5" y="107" width="3" height="4" fill="#D8C888" opacity="0.8"/><rect x="414.0" y="107" width="3" height="4" fill="#D8C888" opacity="0.8"/><rect x="418.5" y="107" width="3" height="4" fill="#D8C888" opacity="0.8"/><rect x="423.0" y="107" width="3" height="4" fill="#D8C888" opacity="0.8"/><rect x="427.5" y="107" width="3" height="4" fill="#D8C888" opacity="0.8"/><rect x="432.0" y="107" width="3" height="4" fill="#D8C888" opacity="0.8"/><rect x="436.5" y="107" width="3" height="4" fill="#D8C888" opacity="0.8"/><rect x="441.0" y="107" width="3" height="4" fill="#D8C888" opacity="0.8"/><rect x="445.5" y="107" width="3" height="4" fill="#D8C888" opacity="0.8"/><rect x="450.0" y="107" width="3" height="4" fill="#D8C888" opacity="0.8"/><rect x="454.5" y="107" width="3" height="4" fill="#D8C888" opacity="0.8"/><rect x="459.0" y="107" width="3" height="4" fill="#D8C888" opacity="0.8"/><rect x="463.5" y="107" width="3" height="4" fill="#D8C888" opacity="0.8"/><rect x="468.0" y="107" width="3" height="4" fill="#D8C888" opacity="0.8"/><rect x="472.5" y="107" width="3" height="4" fill="#D8C888" opacity="0.8"/><rect x="477.0" y="107" width="3" height="4" fill="#D8C888" opacity="0.8"/><rect x="481.5" y="107" width="3" height="4" fill="#D8C888" opacity="0.8"/><rect x="486.0" y="107" width="3" height="4" fill="#D8C888" opacity="0.8"/><rect x="490.5" y="107" width="3" height="4" fill="#D8C888" opacity="0.8"/><rect x="495.0" y="107" width="3" height="4" fill="#D8C888" opacity="0.8"/><rect x="499.5" y="107" width="3" height="4" fill="#D8C888" opacity="0.8"/><rect x="504.0" y="107" width="3" height="4" fill="#D8C888" opacity="0.8"/><rect x="508.5" y="107" width="3" height="4" fill="#D8C888" opacity="0.8"/><rect x="513.0" y="107" width="3" height="4" fill="#D8C888" opacity="0.8"/><rect x="517.5" y="107" width="3" height="4" fill="#D8C888" opacity="0.8"/><rect x="522.0" y="107" width="3" height="4" fill="#D8C888" opacity="0.8"/><rect x="526.5" y="107" width="3" height="4" fill="#D8C888" opacity="0.8"/><rect x="531.0" y="107" width="3" height="4" fill="#D8C888" opacity="0.8"/><rect x="535.5" y="107" width="3" height="4" fill="#D8C888" opacity="0.8"/><rect x="540.0" y="107" width="3" height="4" fill="#D8C888" opacity="0.8"/><rect x="544.5" y="107" width="3" height="4" fill="#D8C888" opacity="0.8"/><rect x="549.0" y="107" width="3" height="4" fill="#D8C888" opacity="0.8"/><rect x="553.5" y="107" width="3" height="4" fill="#D8C888" opacity="0.8"/><rect x="558.0" y="107" width="3" height="4" fill="#D8C888" opacity="0.8"/><rect x="562.5" y="107" width="3" height="4" fill="#D8C888" opacity="0.8"/><rect x="567.0" y="107" width="3" height="4" fill="#D8C888" opacity="0.8"/><rect x="261" y="12" width="312" height="18" fill="#C4C8D4" opacity="0.35"/></g><rect x="0" y="0" width="22" height="181" fill="url(#pg)" opacity="0.9"/><path d="M361,0 L360,66 Q357,96 356,136 L357,181" stroke="#3A3440" stroke-width="1.6" fill="none"/><path d="M363,0 L362,66 Q359,96 358,136 L359,181" stroke="#E8E4F0" stroke-width="1" fill="none" opacity="0.7"/><g filter="url(#pb)"><ellipse cx="50.9" cy="77.7" rx="6.3" ry="2.2" fill="#9A8A60" opacity="0.75"/><ellipse cx="24.1" cy="83.1" rx="8.8" ry="2.0" fill="#E0D8B8" opacity="0.75"/><ellipse cx="50.3" cy="84.1" rx="8.5" ry="3.5" fill="#C8BC90" opacity="0.75"/><ellipse cx="105.7" cy="101.0" rx="7.6" ry="5.0" fill="#A89868" opacity="0.75"/><ellipse cx="119.4" cy="91.0" rx="8.0" ry="3.2" fill="#E0D8B8" opacity="0.75"/><ellipse cx="25.4" cy="93.7" rx="4.4" ry="3.2" fill="#C8BC90" opacity="0.75"/><ellipse cx="75.1" cy="85.0" rx="9.0" ry="3.9" fill="#9A8A60" opacity="0.75"/><ellipse cx="59.5" cy="85.1" rx="8.4" ry="3.0" fill="#A89868" opacity="0.75"/><ellipse cx="50.3" cy="83.2" rx="4.1" ry="2.1" fill="#B8A878" opacity="0.75"/><ellipse cx="79.3" cy="96.7" rx="4.1" ry="2.3" fill="#B8A878" opacity="0.75"/><ellipse cx="61.4" cy="82.3" rx="3.1" ry="3.2" fill="#A89868" opacity="0.75"/><ellipse cx="64.5" cy="86.3" rx="6.2" ry="4.9" fill="#B8A878" opacity="0.75"/><ellipse cx="25.1" cy="82.1" rx="3.4" ry="3.8" fill="#E0D8B8" opacity="0.75"/><ellipse cx="124.7" cy="89.5" rx="8.8" ry="2.7" fill="#9A8A60" opacity="0.75"/><ellipse cx="103.4" cy="102.7" rx="7.9" ry="2.2" fill="#9A8A60" opacity="0.75"/><ellipse cx="120.6" cy="86.3" rx="4.1" ry="3.1" fill="#A89868" opacity="0.75"/><ellipse cx="38.3" cy="95.4" rx="5.3" ry="3.9" fill="#B8A878" opacity="0.75"/><ellipse cx="86.5" cy="87.0" rx="5.6" ry="4.1" fill="#9A8A60" opacity="0.75"/><ellipse cx="75.0" cy="93.5" rx="3.7" ry="4.5" fill="#9A8A60" opacity="0.75"/><ellipse cx="67.9" cy="90.6" rx="8.0" ry="3.5" fill="#9A8A60" opacity="0.75"/><ellipse cx="84.9" cy="93.6" rx="6.1" ry="2.1" fill="#9A8A60" opacity="0.75"/><ellipse cx="69.0" cy="94.2" rx="6.6" ry="4.8" fill="#B8A878" opacity="0.75"/><ellipse cx="78.3" cy="86.5" rx="4.5" ry="3.9" fill="#B8A878" opacity="0.75"/><ellipse cx="98.9" cy="105.7" rx="5.4" ry="4.6" fill="#B8A878" opacity="0.75"/><ellipse cx="100.5" cy="103.0" rx="3.7" ry="2.6" fill="#B8A878" opacity="0.75"/><ellipse cx="108.4" cy="100.1" rx="6.1" ry="5.0" fill="#A89868" opacity="0.75"/><ellipse cx="42.0" cy="78.1" rx="5.1" ry="3.6" fill="#C8BC90" opacity="0.75"/><ellipse cx="69.8" cy="92.6" rx="8.2" ry="2.6" fill="#C8BC90" opacity="0.75"/><ellipse cx="122.1" cy="83.9" rx="3.6" ry="3.3" fill="#9A8A60" opacity="0.75"/><ellipse cx="113.3" cy="79.1" rx="6.0" ry="2.2" fill="#E0D8B8" opacity="0.75"/><ellipse cx="123.2" cy="78.9" rx="8.6" ry="4.4" fill="#B8A878" opacity="0.75"/><ellipse cx="33.3" cy="78.1" rx="5.1" ry="4.6" fill="#C8BC90" opacity="0.75"/><ellipse cx="35.1" cy="82.3" rx="5.3" ry="4.5" fill="#E0D8B8" opacity="0.75"/><ellipse cx="71.0" cy="91.2" rx="3.5" ry="3.9" fill="#E0D8B8" opacity="0.75"/><ellipse cx="87.8" cy="102.4" rx="7.4" ry="2.6" fill="#9A8A60" opacity="0.75"/><ellipse cx="62.0" cy="100.7" rx="7.2" ry="4.5" fill="#C8BC90" opacity="0.75"/><ellipse cx="90.8" cy="83.0" rx="4.3" ry="4.3" fill="#B8A878" opacity="0.75"/><ellipse cx="94.5" cy="90.5" rx="3.8" ry="2.3" fill="#C8BC90" opacity="0.75"/><ellipse cx="85.8" cy="87.4" rx="4.2" ry="5.0" fill="#B8A878" opacity="0.75"/><ellipse cx="98.8" cy="87.4" rx="4.9" ry="3.2" fill="#B8A878" opacity="0.75"/><rect x="81" y="77" width="5" height="25" fill="#F0ECD8" transform="rotate(-15 83 89)"/><circle cx="63" cy="98" r="3" fill="#F4F0E0"/><circle cx="99" cy="103" r="3" fill="#EEE8D8"/><rect x="66" y="11" width="3" height="45" fill="#F0F0F8" opacity="0.7" transform="rotate(8 67 34)"/><ellipse cx="549" cy="77" rx="5" ry="5" fill="#F0ECDC"/><circle cx="339" cy="145" r="3" fill="#FFFFFF"/><rect x="121" y="88" width="453" height="7" fill="#A8A078" opacity="0.35"/></g></svg><!--/PANO-->
<svg class="a" style="left:278px;top:533px" width="632" height="235" viewBox="0 0 632 235">
 <line x1="10" y1="212.20000000000005" x2="594" y2="212.20000000000005" stroke="#303030" stroke-width="1.8"/>
 <line x1="63.0" y1="213" x2="63.0" y2="221" stroke="#8A8A8A" stroke-width="1.5"/><line x1="72.6" y1="213" x2="72.6" y2="216.5" stroke="#333" stroke-width="1.2"/><line x1="82.1" y1="213" x2="82.1" y2="216.5" stroke="#333" stroke-width="1.2"/><line x1="91.6" y1="213" x2="91.6" y2="216.5" stroke="#333" stroke-width="1.2"/><line x1="101.2" y1="213" x2="101.2" y2="216.5" stroke="#333" stroke-width="1.2"/><line x1="110.8" y1="213" x2="110.8" y2="218" stroke="#333" stroke-width="1.2"/><line x1="120.3" y1="213" x2="120.3" y2="216.5" stroke="#333" stroke-width="1.2"/><line x1="129.9" y1="213" x2="129.9" y2="216.5" stroke="#333" stroke-width="1.2"/><line x1="139.4" y1="213" x2="139.4" y2="216.5" stroke="#333" stroke-width="1.2"/><line x1="148.9" y1="213" x2="148.9" y2="216.5" stroke="#333" stroke-width="1.2"/><line x1="158.5" y1="213" x2="158.5" y2="221" stroke="#8A8A8A" stroke-width="1.5"/><line x1="168.1" y1="213" x2="168.1" y2="216.5" stroke="#333" stroke-width="1.2"/><line x1="177.6" y1="213" x2="177.6" y2="216.5" stroke="#333" stroke-width="1.2"/><line x1="187.1" y1="213" x2="187.1" y2="216.5" stroke="#333" stroke-width="1.2"/><line x1="196.7" y1="213" x2="196.7" y2="216.5" stroke="#333" stroke-width="1.2"/><line x1="206.2" y1="213" x2="206.2" y2="218" stroke="#333" stroke-width="1.2"/><line x1="215.8" y1="213" x2="215.8" y2="216.5" stroke="#333" stroke-width="1.2"/><line x1="225.4" y1="213" x2="225.4" y2="216.5" stroke="#333" stroke-width="1.2"/><line x1="234.9" y1="213" x2="234.9" y2="216.5" stroke="#333" stroke-width="1.2"/><line x1="244.5" y1="213" x2="244.5" y2="216.5" stroke="#333" stroke-width="1.2"/><line x1="254.0" y1="213" x2="254.0" y2="221" stroke="#8A8A8A" stroke-width="1.5"/><line x1="263.5" y1="213" x2="263.5" y2="216.5" stroke="#333" stroke-width="1.2"/><line x1="273.1" y1="213" x2="273.1" y2="216.5" stroke="#333" stroke-width="1.2"/><line x1="282.6" y1="213" x2="282.6" y2="216.5" stroke="#333" stroke-width="1.2"/><line x1="292.2" y1="213" x2="292.2" y2="216.5" stroke="#333" stroke-width="1.2"/><line x1="301.8" y1="213" x2="301.8" y2="218" stroke="#333" stroke-width="1.2"/><line x1="311.3" y1="213" x2="311.3" y2="216.5" stroke="#333" stroke-width="1.2"/><line x1="320.9" y1="213" x2="320.9" y2="216.5" stroke="#333" stroke-width="1.2"/><line x1="330.4" y1="213" x2="330.4" y2="216.5" stroke="#333" stroke-width="1.2"/><line x1="340.0" y1="213" x2="340.0" y2="216.5" stroke="#333" stroke-width="1.2"/><line x1="349.5" y1="213" x2="349.5" y2="221" stroke="#8A8A8A" stroke-width="1.5"/><line x1="359.0" y1="213" x2="359.0" y2="216.5" stroke="#333" stroke-width="1.2"/><line x1="368.6" y1="213" x2="368.6" y2="216.5" stroke="#333" stroke-width="1.2"/><line x1="378.2" y1="213" x2="378.2" y2="216.5" stroke="#333" stroke-width="1.2"/><line x1="387.7" y1="213" x2="387.7" y2="216.5" stroke="#333" stroke-width="1.2"/><line x1="397.2" y1="213" x2="397.2" y2="218" stroke="#333" stroke-width="1.2"/><line x1="406.8" y1="213" x2="406.8" y2="216.5" stroke="#333" stroke-width="1.2"/><line x1="416.4" y1="213" x2="416.4" y2="216.5" stroke="#333" stroke-width="1.2"/><line x1="425.9" y1="213" x2="425.9" y2="216.5" stroke="#333" stroke-width="1.2"/><line x1="435.5" y1="213" x2="435.5" y2="216.5" stroke="#333" stroke-width="1.2"/><line x1="445.0" y1="213" x2="445.0" y2="221" stroke="#8A8A8A" stroke-width="1.5"/><line x1="454.5" y1="213" x2="454.5" y2="216.5" stroke="#333" stroke-width="1.2"/><line x1="464.1" y1="213" x2="464.1" y2="216.5" stroke="#333" stroke-width="1.2"/><line x1="473.7" y1="213" x2="473.7" y2="216.5" stroke="#333" stroke-width="1.2"/><line x1="483.2" y1="213" x2="483.2" y2="216.5" stroke="#333" stroke-width="1.2"/><line x1="492.8" y1="213" x2="492.8" y2="218" stroke="#333" stroke-width="1.2"/><line x1="502.3" y1="213" x2="502.3" y2="216.5" stroke="#333" stroke-width="1.2"/><line x1="511.9" y1="213" x2="511.9" y2="216.5" stroke="#333" stroke-width="1.2"/><line x1="521.4" y1="213" x2="521.4" y2="216.5" stroke="#333" stroke-width="1.2"/><line x1="531.0" y1="213" x2="531.0" y2="216.5" stroke="#333" stroke-width="1.2"/><line x1="540.5" y1="213" x2="540.5" y2="221" stroke="#8A8A8A" stroke-width="1.5"/><line x1="550.0" y1="213" x2="550.0" y2="216.5" stroke="#333" stroke-width="1.2"/><line x1="559.6" y1="213" x2="559.6" y2="216.5" stroke="#333" stroke-width="1.2"/><line x1="569.2" y1="213" x2="569.2" y2="216.5" stroke="#333" stroke-width="1.2"/><line x1="578.7" y1="213" x2="578.7" y2="216.5" stroke="#333" stroke-width="1.2"/><line x1="588.2" y1="213" x2="588.2" y2="218" stroke="#333" stroke-width="1.2"/><line x1="53.4" y1="213" x2="53.4" y2="216.5" stroke="#333" stroke-width="1.2"/><line x1="43.9" y1="213" x2="43.9" y2="216.5" stroke="#333" stroke-width="1.2"/><line x1="34.4" y1="213" x2="34.4" y2="216.5" stroke="#333" stroke-width="1.2"/><text x="56.0" y="229" font-size="11" fill="#333" font-family="Liberation Sans">59m</text><text x="151.5" y="229" font-size="11" fill="#333" font-family="Liberation Sans">60m</text><text x="247.0" y="229" font-size="11" fill="#333" font-family="Liberation Sans">61m</text><text x="342.5" y="229" font-size="11" fill="#333" font-family="Liberation Sans">62m</text><text x="438.0" y="229" font-size="11" fill="#333" font-family="Liberation Sans">63m</text><text x="533.5" y="229" font-size="11" fill="#333" font-family="Liberation Sans">64m</text><line x1="10" y1="30" x2="21" y2="30" stroke="#333" stroke-width="1.2"/><line x1="15" y1="45" x2="21" y2="45" stroke="#999" stroke-width="1.6"/><line x1="15" y1="60" x2="21" y2="60" stroke="#333" stroke-width="1.6"/><line x1="10" y1="75" x2="21" y2="75" stroke="#333" stroke-width="1.2"/><line x1="15" y1="90" x2="21" y2="90" stroke="#333" stroke-width="1.6"/><line x1="15" y1="105" x2="21" y2="105" stroke="#999" stroke-width="1.6"/><line x1="10" y1="120" x2="21" y2="120" stroke="#333" stroke-width="1.2"/><line x1="15" y1="135" x2="21" y2="135" stroke="#999" stroke-width="1.6"/><line x1="15" y1="150" x2="21" y2="150" stroke="#333" stroke-width="1.6"/><line x1="10" y1="165" x2="21" y2="165" stroke="#333" stroke-width="1.2"/><line x1="15" y1="180" x2="21" y2="180" stroke="#333" stroke-width="1.6"/><line x1="15" y1="195" x2="21" y2="195" stroke="#999" stroke-width="1.6"/><line x1="10" y1="210" x2="21" y2="210" stroke="#333" stroke-width="1.2"/><text x="1" y="39" font-size="11" fill="#333" font-family="Liberation Sans">0</text><text x="1" y="79" font-size="11" fill="#333" font-family="Liberation Sans">3</text><text x="1" y="124" font-size="11" fill="#333" font-family="Liberation Sans">6</text><text x="1" y="169" font-size="11" fill="#333" font-family="Liberation Sans">9</text><text x="1" y="214" font-size="11" fill="#333" font-family="Liberation Sans">0</text>
 <line x1="21" y1="31" x2="21" y2="212" stroke="#0000E0" stroke-width="1.6" stroke-dasharray="12 3"/>
 <line x1="21" y1="213" x2="21" y2="234" stroke="#9A9A9A" stroke-width="1.5"/>
 <path d="M18 220 L21.5 213 L25 220 Z" fill="#0000F0"/>
 <path d="M11 32 H21 M15.5 36 L21 31.5" stroke="#1A2AF0" stroke-width="1.6" fill="none"/>
</svg>
<div class="a" style="left:872px;top:564px;width:38px;height:203px;background:#F0F0F0">
 <svg class="a" style="left:0;top:0" width="38" height="203" viewBox="0 0 38 203" fill="none" stroke="#333" stroke-width="1.7">
  <path d="M26 9 L13 21 C10 24 10 26 13 26 C16 26 18 24 21 24 L24 24"/><path d="M26 9 L29 12 L16 24"/><path d="M25 8 L30 13" stroke-width="3"/>
  <circle cx="30" cy="24" r="3" fill="#333" stroke="none"/>
  <path d="M2 30 V34 H6 Z" fill="#111" stroke="none"/>
  <path d="M11 42 H27 M15 42 V39.5 H23 V42" stroke-width="1.6"/><path d="M12.5 44 V61 Q12.5 62 13.5 62 H24.5 Q25.5 62 25.5 61 V44" stroke-width="1.6"/>
  <path d="M16 47 V58 M19 47 V58 M22 47 V58" stroke-width="1.5"/>
  <rect x="8.5" y="76" width="22" height="21" rx="1.5"/><path d="M12 76 V84 H27 V76"/><path d="M23 78.5 V81.5" stroke-width="1.6"/>
  <circle cx="17" cy="120" r="7.5" stroke-width="2.2"/><path d="M13.5 120 H20.5 M17 116.5 V123.5" stroke-width="2"/><path d="M22.5 125.5 L29 132" stroke-width="3.2" stroke-linecap="round"/>
  <rect x="9" y="146" width="21" height="19" stroke-width="1.6"/><path d="M10 163 L16 153 L20 159 L23 155 L29 162" stroke-width="1.4"/>
  <circle cx="25" cy="151" r="2" stroke-width="1.2"/>
 </svg>
</div>


<div class="a" style="left:281px;top:537px;width:180px;height:23px;border:1.5px solid #2AA2F4;border-radius:12px;background:linear-gradient(90deg,#DCDCDC 0,#DCDCDC 50%,#00A4FF 50%,#0079E8 100%);box-shadow:0 1px 0 #B8D8F0"></div>
<div class="a" style="left:308px;top:540px;font-size:12px;line-height:17px;color:#3A7BE0">色谱图</div>
<div class="a" style="left:387px;top:540px;font-size:12px;line-height:17px;color:#fff">全景图</div>
<svg class="a" style="left:677px;top:543px" width="22" height="12" viewBox="0 0 22 12"><rect x="0" y="0" width="3" height="12" fill="#333"/><rect x="19" y="0" width="3" height="12" fill="#333"/><rect x="2" y="2.5" width="18" height="7" fill="#333"/></svg>
<div class="a" style="left:710px;top:538px;width:70px;height:20px;background:#fff;border:1px solid #E0E0E0"></div>
<div class="a" style="left:712px;top:540px;font-size:11px;line-height:15px;color:#222">默认</div>
<svg class="a" style="left:768px;top:545px" width="9" height="6" viewBox="0 0 9 6"><path d="M1 1 L4.5 4.5 L8 1" stroke="#888" stroke-width="1" fill="none"/></svg>
<div class="a" style="left:786px;top:538px;width:45px;height:22px;background:#626262"></div>
<div class="a" style="left:786px;top:541px;width:45px;font-size:11.5px;line-height:16px;color:#E4E4E4;text-align:center">1:1.00</div>
<svg class="a" style="left:842px;top:538px" width="24" height="22" viewBox="0 0 24 22" fill="none" stroke="#444" stroke-width="1.8">
 <path d="M22 5 V3.5 Q22 1 19.5 1 H4 Q1 1 1 4 V17 Q1 20 4 20 H11"/>
 <path d="M4 16 L8 11 L10 13 L13 10 L15 12" stroke-width="2.2"/><circle cx="6.5" cy="6" r="1.5" fill="#444" stroke="none"/>
 <path d="M19 9 V20 M15.5 16.5 L19 20.5 L22.5 16.5" stroke-width="2"/>
</svg>
<svg class="a" style="left:880px;top:538px" width="22" height="22" viewBox="0 0 22 22" fill="none" stroke="#444" stroke-width="1.7">
 <path d="M8 1.5 H1.5 V20.5 H20.5 V13"/><rect x="14" y="1.5" width="6.5" height="6.5" rx="0.5"/>
 <path d="M5 17 L13 9 M8.5 9 H13 V13.5"/>
</svg>

<!-- video panel -->
<div class="a" style="left:914px;top:533px;width:444px;height:235px;background:#EEE;border-left:1px solid #B8B8B8"></div>
<div class="a ph" style="left:915px;top:534px;width:442px;height:30px"></div>
<!--VID--><svg class="a" style="left:915px;top:564px" width="442" height="203" viewBox="0 0 442 203"><defs><radialGradient id="vig" cx="0.5" cy="0.5" r="0.5"><stop offset="0.6" stop-color="#2A2A2A"/><stop offset="0.8" stop-color="#1A1A1A"/><stop offset="1" stop-color="#000" stop-opacity="0"/></radialGradient><radialGradient id="disc" cx="0.51" cy="0.47" r="0.62"><stop offset="0" stop-color="#404046"/><stop offset="0.1" stop-color="#58585E"/><stop offset="0.38" stop-color="#9696A2"/><stop offset="0.7" stop-color="#B8B8C6"/><stop offset="1" stop-color="#C8C8DA"/></radialGradient><linearGradient id="floor" x1="0" y1="0" x2="0" y2="1"><stop offset="0" stop-color="#8A8270" stop-opacity="0"/><stop offset="0.3" stop-color="#A89E80" stop-opacity="0.8"/><stop offset="1" stop-color="#BCB08A"/></linearGradient><filter id="vb" x="-20%" y="-20%" width="140%" height="140%"><feGaussianBlur stdDeviation="3.5"/></filter><filter id="vb1"><feGaussianBlur stdDeviation="0.7"/></filter><filter id="vb2" x="-30%" y="-30%" width="160%" height="160%"><feGaussianBlur stdDeviation="7"/></filter><clipPath id="dclip"><circle cx="223" cy="104.5" r="88.5"/></clipPath><linearGradient id="rg" x1="0" y1="0" x2="0" y2="1"><stop offset="0" stop-color="#fff"/><stop offset="0.45" stop-color="#fff"/><stop offset="0.62" stop-color="#fff" stop-opacity="0.15"/><stop offset="1" stop-color="#fff" stop-opacity="0"/></linearGradient><mask id="upclip" maskUnits="userSpaceOnUse" x="0" y="0" width="442" height="203"><rect x="133" y="14.5" width="180" height="180" fill="url(#rg)"/></mask></defs><rect width="442" height="203" fill="#000"/><circle cx="223" cy="104.5" r="135" fill="url(#vig)" opacity="0.5"/><circle cx="223" cy="104.5" r="101" fill="#1E1E1E"/><circle cx="223" cy="104.5" r="95" fill="#0C0C0C"/><g clip-path="url(#dclip)"><circle cx="223" cy="104.5" r="88.5" fill="url(#disc)"/><g mask="url(#upclip)" filter="url(#vb1)"><circle cx="227" cy="100.5" r="30" fill="none" stroke="#DADAE6" stroke-width="2" opacity="0.28"/><circle cx="227" cy="100.5" r="32.5" fill="none" stroke="#505060" stroke-width="1.2" opacity="0.18"/><circle cx="227" cy="100.5" r="40" fill="none" stroke="#DADAE6" stroke-width="2" opacity="0.28"/><circle cx="227" cy="100.5" r="42.5" fill="none" stroke="#505060" stroke-width="1.2" opacity="0.18"/><circle cx="227" cy="100.5" r="50" fill="none" stroke="#DADAE6" stroke-width="2" opacity="0.28"/><circle cx="227" cy="100.5" r="52.5" fill="none" stroke="#505060" stroke-width="1.2" opacity="0.18"/><circle cx="227" cy="100.5" r="60" fill="none" stroke="#DADAE6" stroke-width="2" opacity="0.28"/><circle cx="227" cy="100.5" r="62.5" fill="none" stroke="#505060" stroke-width="1.2" opacity="0.18"/><circle cx="227" cy="100.5" r="70" fill="none" stroke="#DADAE6" stroke-width="2" opacity="0.28"/><circle cx="227" cy="100.5" r="72.5" fill="none" stroke="#505060" stroke-width="1.2" opacity="0.18"/><circle cx="227" cy="100.5" r="79" fill="none" stroke="#DADAE6" stroke-width="2" opacity="0.28"/><circle cx="227" cy="100.5" r="81.5" fill="none" stroke="#505060" stroke-width="1.2" opacity="0.18"/><circle cx="227" cy="100.5" r="87" fill="none" stroke="#DADAE6" stroke-width="2" opacity="0.28"/><circle cx="227" cy="100.5" r="89.5" fill="none" stroke="#505060" stroke-width="1.2" opacity="0.18"/></g><g filter="url(#vb)"><path d="M135,154.5 L211,116.5 L243,116.5 L311,149.5 L311,199.5 L135,199.5 Z" fill="url(#floor)"/><path d="M165,186.5 Q183,149.5 209,128.5" stroke="#D8CCA0" stroke-width="7" fill="none" opacity="0.6"/><path d="M285,170.5 Q263,142.5 239,126.5" stroke="#CCC4A4" stroke-width="6" fill="none" opacity="0.6"/><ellipse cx="220" cy="156.5" rx="12" ry="34" fill="#4A3E28" opacity="0.55"/><path d="M135,129.5 L208,102.5 L153,154.5 Z" fill="#9098A8" opacity="0.5"/><ellipse cx="158" cy="134.5" rx="18" ry="7" fill="#E0E0EA" opacity="0.45"/></g><ellipse cx="226" cy="101.5" rx="20" ry="11" fill="#303034" opacity="0.5" filter="url(#vb2)"/></g><text x="46" y="9.5" font-size="7" fill="#E8E8E8" font-family="Liberation Sans" letter-spacing="0.35" font-weight="bold">任务名称:工程名称   检测方向:逆向</text><text x="46" y="17.600000000000023" font-size="7" fill="#E8E8E8" font-family="Liberation Sans" letter-spacing="0.35" font-weight="bold">检测地点:检测地点90  检测日期:2024-04-12</text><text x="46" y="25.700000000000045" font-size="7" fill="#E8E8E8" font-family="Liberation Sans" letter-spacing="0.35" font-weight="bold">起始-终止井号:YS08-YS02  管径:圆形(mm):600</text><text x="46" y="33.799999999999955" font-size="7" fill="#E8E8E8" font-family="Liberation Sans" letter-spacing="0.35" font-weight="bold">管道材质:玻璃钢管  管道类型:污水管道</text><text x="46" y="41.89999999999998" font-size="7" fill="#E8E8E8" font-family="Liberation Sans" letter-spacing="0.35" font-weight="bold">检测单位:检测单位  检测人员:检测人员</text><text x="46" y="193" font-size="7" fill="#E8E8E8" font-family="Liberation Sans" letter-spacing="0.35" font-weight="bold">距离:58.55 m 速度:0.00 m/s</text><text x="46" y="201.5" font-size="7" fill="#E8E8E8" font-family="Liberation Sans" letter-spacing="0.35" font-weight="bold">2024-04-12 09:29:41</text></svg><!--/VID-->

<div class="a bar" style="left:282px;top:102px"></div>
<div class="a ttl" style="left:295px;top:102px;line-height:17px;letter-spacing:0.6px">管道三维模型（1/2044)</div>
<div class="a bar" style="left:921px;top:102px"></div>
<div class="a ttl" style="left:933px;top:102px;line-height:17px">管道断面轮廓图</div>
<div class="a bar" style="left:920px;top:541px"></div>
<div class="a ttl" style="left:933px;top:539px;font-size:13px;line-height:18px">视频图像（78/24030)</div>
</body></html>
